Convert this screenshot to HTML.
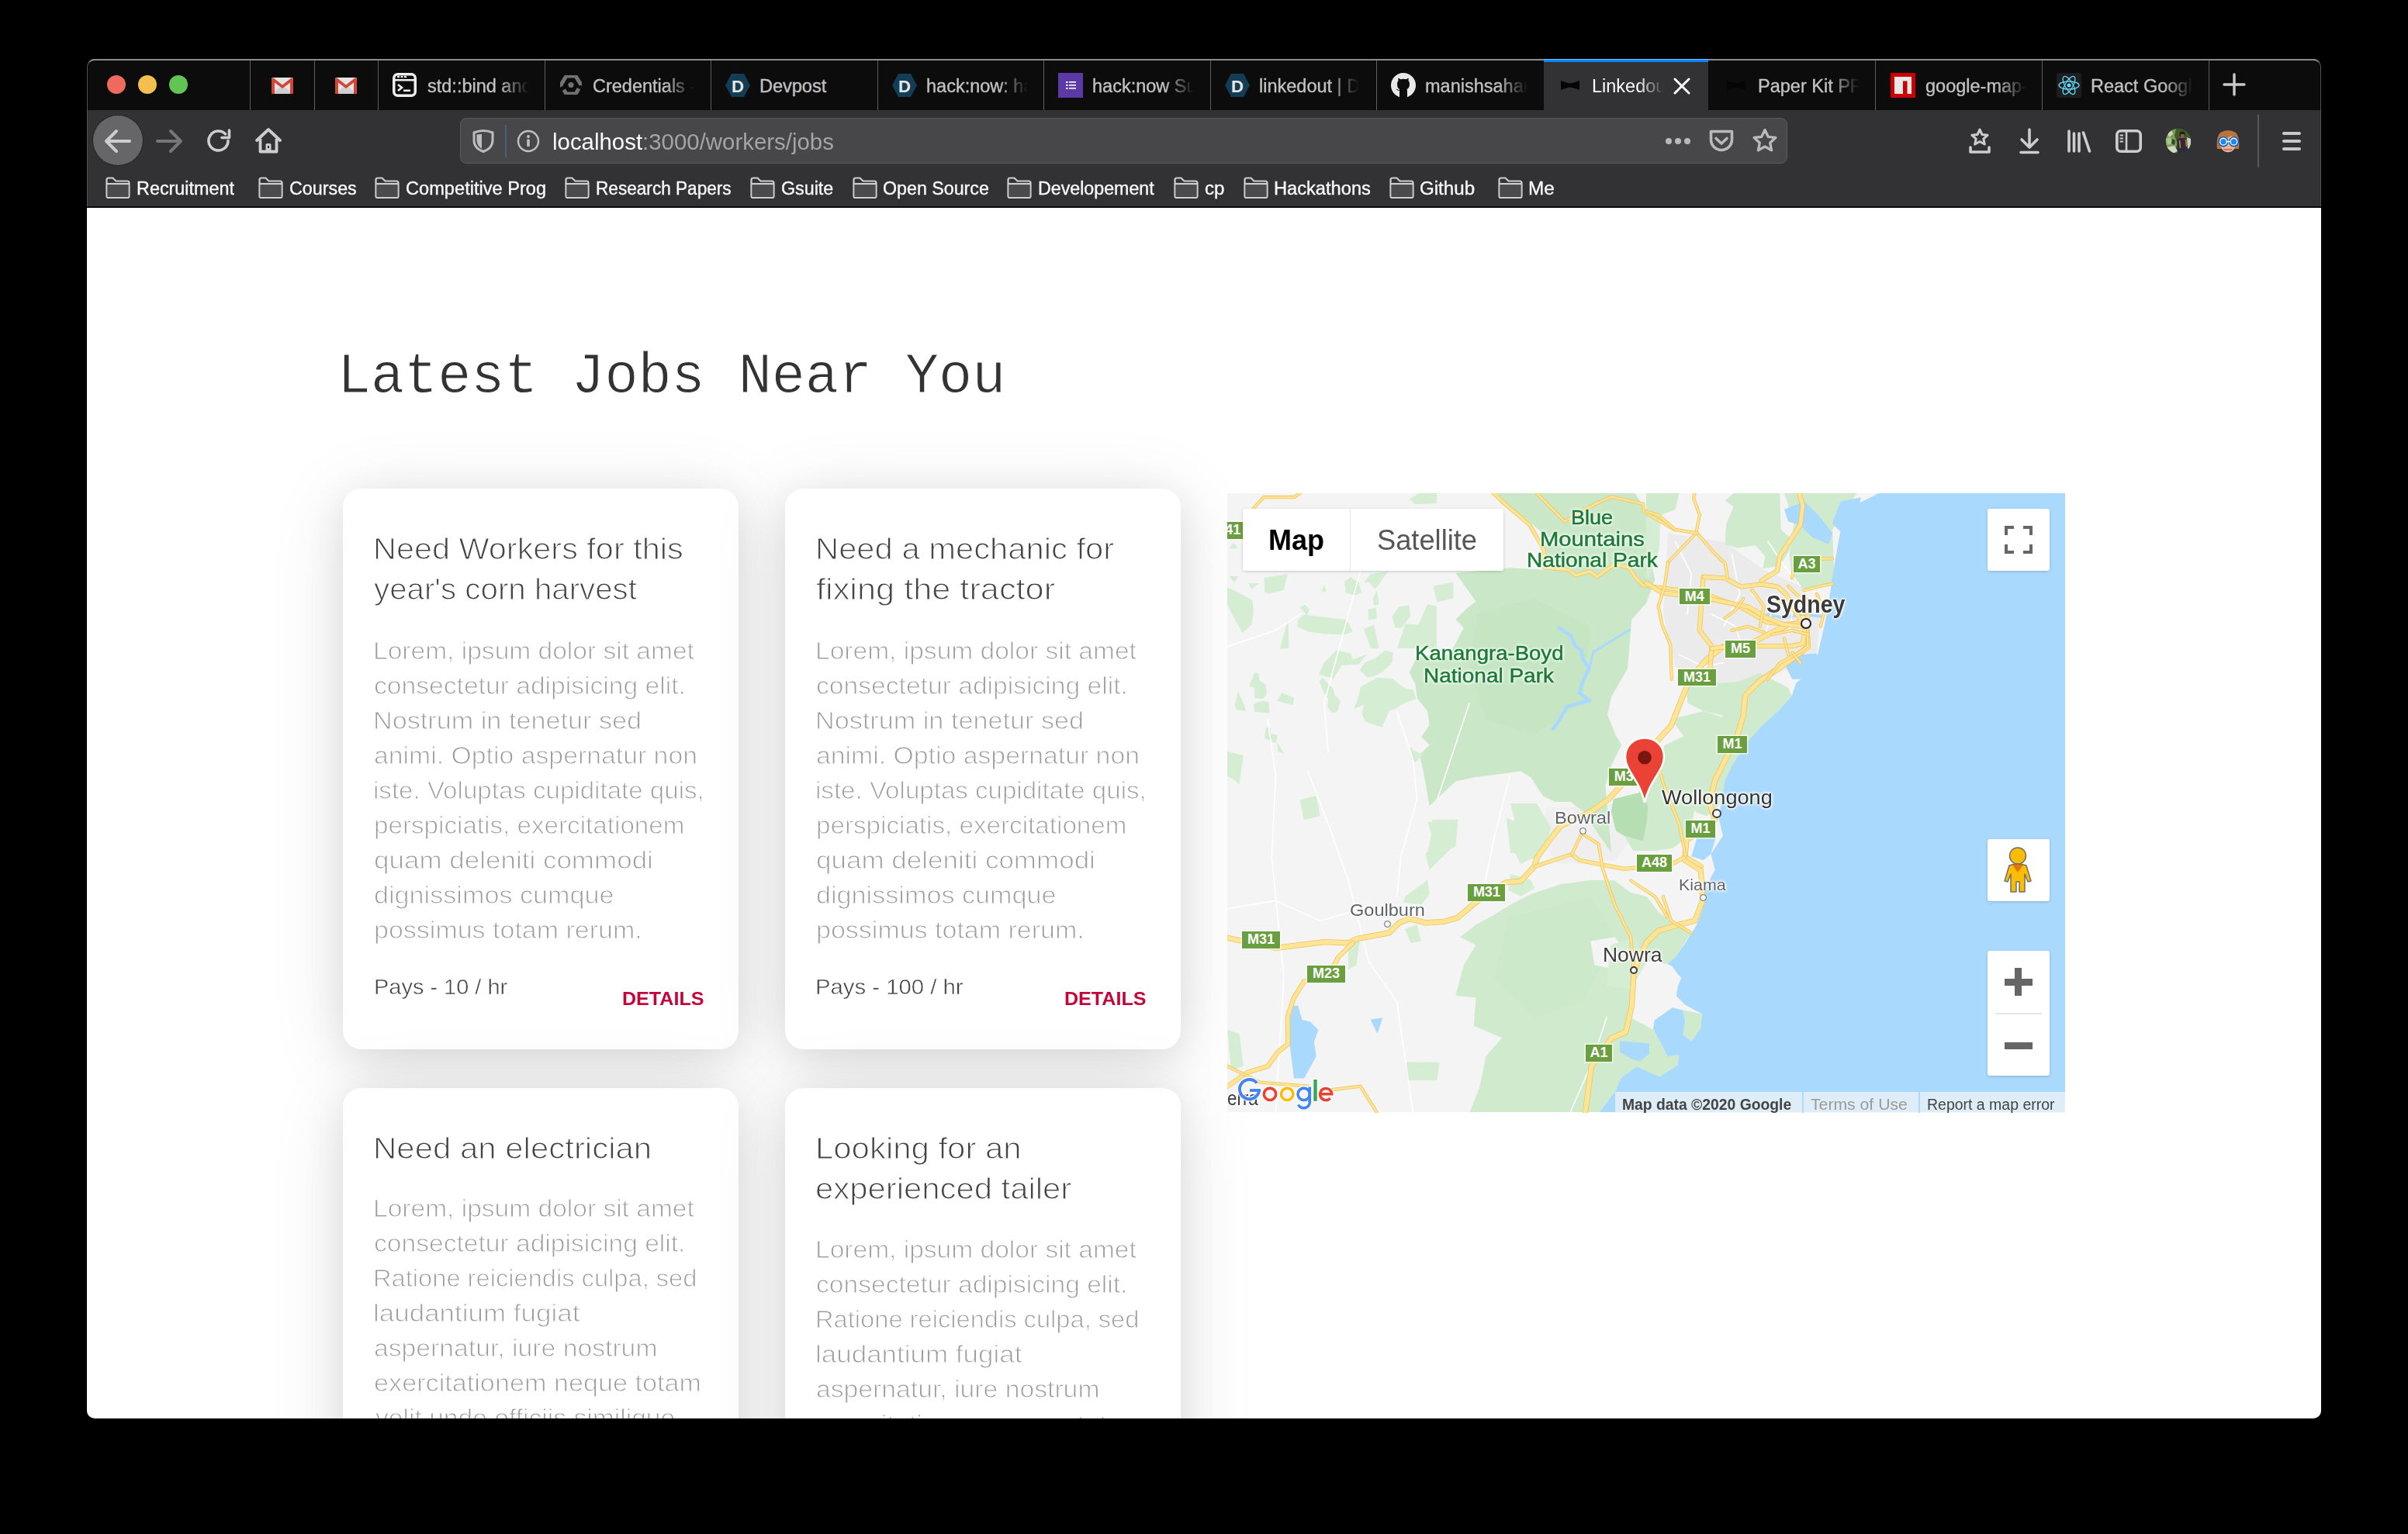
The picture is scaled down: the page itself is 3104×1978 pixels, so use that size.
<!DOCTYPE html>
<html><head><meta charset="utf-8">
<style>
html,body{margin:0;padding:0;background:#000;width:3104px;height:1978px;overflow:hidden;font-family:"Liberation Sans",sans-serif}
.tx{position:absolute;white-space:pre;transform-origin:0 0}
.ab{position:absolute}
</style></head><body>
<div class="ab" style="left:112px;top:76px;width:2880px;height:1753px;background:#323234;border-radius:10px;overflow:hidden">
<div class="ab" style="left:0;top:0;width:2880px;height:66px;background:#0c0c0d"></div>
<div class="ab" style="left:0;top:0;width:2880px;height:2px;background:#8c8c8c;border-radius:10px 10px 0 0"></div>
<div class="ab" style="left:0;top:190px;width:2880px;height:2px;background:#0a0a0a"></div>
<div class="ab" style="left:0;top:66px;width:1px;height:124px;background:#4a4a4c"></div>
<div class="ab" style="right:0;top:66px;width:1px;height:124px;background:#4a4a4c"></div>
</div>
<div class="ab" style="left:112px;top:76px;width:2880px;height:190px;border-radius:10px 10px 0 0;border-top:2px solid #8c8c8c;box-sizing:border-box;border-left:1px solid #525254;border-right:1px solid #525254"></div>
<div class="ab" style="left:138px;top:97px;width:24px;height:24px;border-radius:50%;background:#ee6a5f"></div>
<div class="ab" style="left:178px;top:97px;width:24px;height:24px;border-radius:50%;background:#f5bf4f"></div>
<div class="ab" style="left:218px;top:97px;width:24px;height:24px;border-radius:50%;background:#61c554"></div>
<div class="ab" style="left:322px;top:78px;width:1px;height:64px;background:#5c5c5d"></div>
<div class="ab" style="left:405px;top:78px;width:1px;height:64px;background:#5c5c5d"></div>
<div class="ab" style="left:487px;top:78px;width:1px;height:64px;background:#5c5c5d"></div>
<div class="ab" style="left:702px;top:78px;width:1px;height:64px;background:#5c5c5d"></div>
<div class="ab" style="left:916px;top:78px;width:1px;height:64px;background:#5c5c5d"></div>
<div class="ab" style="left:1131px;top:78px;width:1px;height:64px;background:#5c5c5d"></div>
<div class="ab" style="left:1345px;top:78px;width:1px;height:64px;background:#5c5c5d"></div>
<div class="ab" style="left:1560px;top:78px;width:1px;height:64px;background:#5c5c5d"></div>
<div class="ab" style="left:1774px;top:78px;width:1px;height:64px;background:#5c5c5d"></div>
<div class="ab" style="left:2417px;top:78px;width:1px;height:64px;background:#5c5c5d"></div>
<div class="ab" style="left:2632px;top:78px;width:1px;height:64px;background:#5c5c5d"></div>
<div class="ab" style="left:2847px;top:78px;width:1px;height:64px;background:#5c5c5d"></div>
<div class="ab" style="left:1990px;top:76px;width:212px;height:66px;background:#323234"></div>
<div class="ab" style="left:1990px;top:76px;width:212px;height:4px;background:#0a84ff"></div>
<div class="ab" style="left:1990px;top:76px;width:212px;height:1px;background:#7fc0ff"></div>
<svg class="ab" style="left:350px;top:100px" width="28" height="21" viewBox="0 0 28 21"><path d="M2 0H26Q28 0 28 2V19Q28 21 26 21H2Q0 21 0 19V2Q0 0 2 0Z" fill="#e4e4e4"/><path d="M0 21L14 10L28 21Z" fill="#cfcfcf"/><path d="M0 2.5Q0 0 2.5 0.5L14 9.5L25.5 0.5Q28 0 28 2.5V21H24V6.5L14 14L4 6.5V21H0Z" fill="#d0463a"/></svg>
<svg class="ab" style="left:432px;top:100px" width="28" height="21" viewBox="0 0 28 21"><path d="M2 0H26Q28 0 28 2V19Q28 21 26 21H2Q0 21 0 19V2Q0 0 2 0Z" fill="#e4e4e4"/><path d="M0 21L14 10L28 21Z" fill="#cfcfcf"/><path d="M0 2.5Q0 0 2.5 0.5L14 9.5L25.5 0.5Q28 0 28 2.5V21H24V6.5L14 14L4 6.5V21H0Z" fill="#d0463a"/></svg>
<svg class="ab" style="left:506px;top:94px" width="31" height="31" viewBox="0 0 31 31"><rect x="1.75" y="1.75" width="27.5" height="27.5" rx="5" fill="none" stroke="#efefef" stroke-width="3.5"/><rect x="2" y="8" width="27" height="2.5" fill="#efefef"/><rect x="6" y="4" width="3" height="2.2" fill="#efefef"/><rect x="10.5" y="4" width="3" height="2.2" fill="#efefef"/><rect x="15" y="4" width="3" height="2.2" fill="#efefef"/><path d="M7 15L12 19L7 23" fill="none" stroke="#efefef" stroke-width="2.6"/><rect x="14" y="21.5" width="9" height="2.6" fill="#efefef"/></svg>
<svg class="ab" style="left:722px;top:97px" width="28" height="25" viewBox="0 0 28 25"><path d="M8 1H20L27 12.5L20 24H8L1 12.5Z" fill="none" stroke="#727272" stroke-width="5" stroke-dasharray="26 5"/><circle cx="14" cy="12.5" r="3.6" fill="#727272"/></svg>
<svg class="ab" style="left:935px;top:95px" width="32" height="30" viewBox="0 0 32 30"><path d="M8 0H24L32 15L24 30H8L0 15Z" fill="#133c55"/><text x="16" y="24" text-anchor="middle" font-family="Liberation Sans" font-weight="700" font-size="22" fill="#e8e8e8">D</text></svg>
<svg class="ab" style="left:1150px;top:95px" width="32" height="30" viewBox="0 0 32 30"><path d="M8 0H24L32 15L24 30H8L0 15Z" fill="#133c55"/><text x="16" y="24" text-anchor="middle" font-family="Liberation Sans" font-weight="700" font-size="22" fill="#e8e8e8">D</text></svg>
<svg class="ab" style="left:1579px;top:95px" width="32" height="30" viewBox="0 0 32 30"><path d="M8 0H24L32 15L24 30H8L0 15Z" fill="#133c55"/><text x="16" y="24" text-anchor="middle" font-family="Liberation Sans" font-weight="700" font-size="22" fill="#e8e8e8">D</text></svg>
<svg class="ab" style="left:1364px;top:94px" width="32" height="32" viewBox="0 0 32 32"><rect width="32" height="32" fill="#5b3aa6"/><rect x="10" y="11" width="2.5" height="2" fill="#fff"/><rect x="14" y="11" width="9" height="1.6" fill="#fff"/><rect x="10" y="15" width="2.5" height="2" fill="#fff"/><rect x="14" y="15" width="9" height="1.6" fill="#fff"/><rect x="10" y="19" width="2.5" height="2" fill="#fff"/><rect x="14" y="19" width="9" height="1.6" fill="#fff"/></svg>
<svg class="ab" style="left:1793px;top:94px" width="32" height="32" viewBox="0 0 32 32"><circle cx="16" cy="16" r="16" fill="#e8e8e8"/><path d="M11 27V23Q8 23 6.5 20.5Q9 21 10.5 22.5L11 21Q8 19.5 8 14Q8 11.5 9.5 10L9.3 6.5L12.5 8.3Q16 7.3 19.5 8.3L22.7 6.5L22.5 10Q24 11.5 24 14Q24 19.5 20.5 21Q21 22 21 23.5V27L21 32H11Z" fill="#0c0c0d"/></svg>
<svg class="ab" style="left:2012px;top:104px" width="24" height="12" viewBox="0 0 24 12"><path d="M0 0L12 4L24 0V12L12 8L0 12Z" fill="#050505"/><rect x="9" y="3.5" width="6" height="5" fill="#050505"/></svg>
<svg class="ab" style="left:2226px;top:104px" width="24" height="12" viewBox="0 0 24 12"><path d="M0 0L12 4L24 0V12L12 8L0 12Z" fill="#050505"/><rect x="9" y="3.5" width="6" height="5" fill="#050505"/></svg>
<svg class="ab" style="left:2437px;top:94px" width="32" height="32" viewBox="0 0 32 32"><rect width="32" height="32" fill="#c00"/><path d="M5 5H27V27H21.5V10.5H16V27H5Z" fill="#e8e8e8"/></svg>
<svg class="ab" style="left:2651px;top:94px" width="32" height="32" viewBox="0 0 32 32"><rect width="32" height="32" rx="3" fill="#1e1e1f"/><g fill="none" stroke="#61dafb" stroke-width="1.3" transform="translate(16 16)"><ellipse rx="13" ry="5"/><ellipse rx="13" ry="5" transform="rotate(60)"/><ellipse rx="13" ry="5" transform="rotate(120)"/></g><circle cx="16" cy="16" r="2.5" fill="#61dafb"/></svg>
<svg class="ab" style="left:2157px;top:100px" width="22" height="22" viewBox="0 0 22 22"><path d="M2 2L20 20M20 2L2 20" stroke="#fbfbfb" stroke-width="3" stroke-linecap="round"/></svg>
<svg class="ab" style="left:2865px;top:94px" width="30" height="30" viewBox="0 0 30 30"><path d="M15 2V28M2 15H28" stroke="#c9c9c9" stroke-width="3.4" stroke-linecap="round"/></svg>
<div class="ab" style="left:120px;top:149px;width:64px;height:64px;border-radius:50%;background:#666668;box-shadow:0 0 0 1px #262628"></div>
<svg class="ab" style="left:134px;top:166px" width="36" height="32" viewBox="0 0 36 32"><path d="M4 16H33M16 3L3 16L16 29" fill="none" stroke="#cdcdce" stroke-width="4" stroke-linecap="round" stroke-linejoin="round"/></svg>
<svg class="ab" style="left:200px;top:166px" width="36" height="32" viewBox="0 0 36 32"><path d="M3 16H32M20 3L33 16L20 29" fill="none" stroke="#767678" stroke-width="4" stroke-linecap="round" stroke-linejoin="round"/></svg>
<svg class="ab" style="left:266px;top:165px" width="34" height="33" viewBox="0 0 34 33"><path d="M28 16.5A12.5 12.5 0 1 1 24.5 7.8" fill="none" stroke="#cdcdce" stroke-width="3.6" stroke-linecap="round"/><path d="M29.5 3V12.5H20" fill="none" stroke="#cdcdce" stroke-width="3.6" stroke-linecap="round" stroke-linejoin="round"/></svg>
<svg class="ab" style="left:328px;top:164px" width="36" height="36" viewBox="0 0 36 36"><path d="M3 17L18 3L33 17" fill="none" stroke="#cdcdce" stroke-width="3.8" stroke-linecap="round" stroke-linejoin="round"/><path d="M7.5 15V31.5H28.5V15" fill="none" stroke="#cdcdce" stroke-width="3.8" stroke-linejoin="round"/><rect x="14.5" y="21" width="7" height="11" rx="1.5" fill="#cdcdce"/><rect x="17" y="24" width="2" height="3" fill="#323234"/></svg>
<div class="ab" style="left:593px;top:152px;width:1711px;height:59px;box-sizing:border-box;border:1px solid #5a5a5c;border-radius:8px;background:#474749"></div>
<svg class="ab" style="left:609px;top:167px" width="28" height="30" viewBox="0 0 28 30"><path d="M2 4Q8 1.5 14 1.5Q20 1.5 26 4V14Q26 24 14 28.5Q2 24 2 14Z" fill="none" stroke="#bcbcbe" stroke-width="3"/><path d="M12 6V25L14 26Q6 22 5.5 14V6.5Q9 5.7 12 6Z" fill="#bcbcbe"/></svg>
<div class="ab" style="left:651px;top:161px;width:2px;height:42px;background:#4b5f7a"></div>
<svg class="ab" style="left:666px;top:167px" width="30" height="30" viewBox="0 0 30 30"><circle cx="15" cy="15" r="13" fill="none" stroke="#c0c0c2" stroke-width="2.4"/><circle cx="15" cy="9" r="2" fill="#c0c0c2"/><rect x="13.2" y="12.5" width="3.6" height="9.5" rx="1" fill="#c0c0c2"/></svg>
<div class="ab" style="left:2147px;top:178px;width:8px;height:8px;border-radius:50%;background:#b9b9bb"></div>
<div class="ab" style="left:2159px;top:178px;width:8px;height:8px;border-radius:50%;background:#b9b9bb"></div>
<div class="ab" style="left:2171px;top:178px;width:8px;height:8px;border-radius:50%;background:#b9b9bb"></div>
<svg class="ab" style="left:2202px;top:166px" width="34" height="32" viewBox="0 0 34 32"><path d="M3.5 3.5H30.5V14A13.5 13.5 0 0 1 3.5 14Z" fill="none" stroke="#b9b9bb" stroke-width="3.6" stroke-linejoin="round"/><path d="M10 12.5L17 19L24 12.5" fill="none" stroke="#b9b9bb" stroke-width="3.6" stroke-linecap="round" stroke-linejoin="round"/></svg>
<svg class="ab" style="left:2258px;top:165px" width="34" height="34" viewBox="0 0 34 34"><path d="M17 2.5L21.2 11.3L30.8 12.5L23.7 19.2L25.6 28.7L17 24L8.4 28.7L10.3 19.2L3.2 12.5L12.8 11.3Z" fill="none" stroke="#b9b9bb" stroke-width="3.3" stroke-linejoin="round"/></svg>
<svg class="ab" style="left:2536px;top:165px" width="32" height="34" viewBox="0 0 32 34"><path d="M16 2L19 8.5L26 9.3L20.8 14L22.3 21L16 17.5L9.7 21L11.2 14L6 9.3L13 8.5Z" fill="none" stroke="#cdcdce" stroke-width="3" stroke-linejoin="round"/><path d="M4 25V31H28V25" fill="none" stroke="#cdcdce" stroke-width="3.6" stroke-linecap="round" stroke-linejoin="round"/></svg>
<svg class="ab" style="left:2602px;top:164px" width="28" height="36" viewBox="0 0 28 36"><path d="M14 3V26M4 16L14 26L24 16" fill="none" stroke="#cdcdce" stroke-width="3.6" stroke-linecap="round" stroke-linejoin="round"/><path d="M3 32.5H25" stroke="#cdcdce" stroke-width="3.6" stroke-linecap="round"/></svg>
<svg class="ab" style="left:2664px;top:166px" width="34" height="32" viewBox="0 0 34 32"><path d="M3 3V29M9.5 6V29M16 6V29M21.5 5L29.5 29" fill="none" stroke="#cdcdce" stroke-width="3.6" stroke-linecap="round"/></svg>
<svg class="ab" style="left:2726px;top:166px" width="36" height="32" viewBox="0 0 36 32"><rect x="2.8" y="2.8" width="30.4" height="26.4" rx="5" fill="none" stroke="#cdcdce" stroke-width="3.6"/><path d="M15 3V29" stroke="#cdcdce" stroke-width="2.6"/><path d="M6.5 8.5H11M6.5 12.5H11M6.5 16.5H11" stroke="#cdcdce" stroke-width="1.8"/></svg>
<svg class="ab" style="left:2791px;top:165px" width="34" height="34" viewBox="0 0 34 34"><defs><clipPath id="av"><circle cx="17" cy="17" r="16.3"/></clipPath></defs><g clip-path="url(#av)"><rect width="34" height="34" fill="#3e5a2c"/><path d="M0 0H14L12 10L16 20L10 34H0Z" fill="#7f9c5c"/><path d="M2 4L8 2L10 8L5 12Z" fill="#c8d8b0"/><path d="M1 14L7 12L9 20L3 22Z" fill="#aac48a"/><path d="M2 25L12 23L16 30L8 34L2 32Z" fill="#d0d8c4"/><path d="M9 14L13 16L12 22L8 20Z" fill="#2e4a22"/><path d="M15 15Q21 11 27 14L30 34H16Z" fill="#2b2d3c"/><circle cx="22" cy="8" r="3.6" fill="#2a1c18"/><rect x="20" y="8" width="4.5" height="5" fill="#8a5a40"/><path d="M18.5 16L19.5 26M26.5 15L27.5 24" stroke="#d9772e" stroke-width="1.6"/><path d="M28 12L33 14L33 30L29 26Z" fill="#c9d2c4"/></g></svg>
<svg class="ab" style="left:2856px;top:166px" width="32" height="32" viewBox="0 0 32 32"><path d="M2 26Q0.5 10 6 5Q16 -1 26 5Q31.5 10 30 26Z" fill="#b8743a"/><ellipse cx="16" cy="19.3" rx="10.3" ry="11" fill="#f3b48c"/><path d="M5 9Q14 4 24 8Q16 10 9 17Z" fill="#b8743a"/><path d="M10.5 26.3Q16 28 21.5 26.3" stroke="#9d6474" stroke-width="1.3" fill="none"/><circle cx="10" cy="16.7" r="5.9" fill="#fff" stroke="#0b5fc0" stroke-width="1.6"/><circle cx="23.4" cy="16.7" r="5.9" fill="#fff" stroke="#0b5fc0" stroke-width="1.6"/><circle cx="10" cy="16.7" r="3.7" fill="#1e88f0"/><circle cx="23.4" cy="16.7" r="3.7" fill="#1e88f0"/><rect x="15.2" y="15.6" width="3" height="2" fill="#fff"/></svg>
<div class="ab" style="left:2910px;top:148px;width:2px;height:68px;background:#575759"></div>
<div class="ab" style="left:2942px;top:170px;width:24px;height:4px;border-radius:2px;background:#c8c8ca"></div>
<div class="ab" style="left:2942px;top:180px;width:24px;height:4px;border-radius:2px;background:#c8c8ca"></div>
<div class="ab" style="left:2942px;top:190px;width:24px;height:4px;border-radius:2px;background:#c8c8ca"></div>
<svg class="ab" style="left:136px;top:228px" width="32" height="28" viewBox="0 0 32 28"><path d="M1.5 25V4Q1.5 1.5 4 1.5H9.5L13.5 5.5H28Q30.5 5.5 30.5 8V25Q30.5 27 28.5 27H3.5Q1.5 27 1.5 25Z" fill="none" stroke="#cfcfd0" stroke-width="2.2"/><rect x="2.6" y="10.2" width="26.8" height="15.7" fill="#4b4b4d"/><path d="M1.5 9H30.5" stroke="#cfcfd0" stroke-width="2.2"/></svg>
<svg class="ab" style="left:333px;top:228px" width="32" height="28" viewBox="0 0 32 28"><path d="M1.5 25V4Q1.5 1.5 4 1.5H9.5L13.5 5.5H28Q30.5 5.5 30.5 8V25Q30.5 27 28.5 27H3.5Q1.5 27 1.5 25Z" fill="none" stroke="#cfcfd0" stroke-width="2.2"/><rect x="2.6" y="10.2" width="26.8" height="15.7" fill="#4b4b4d"/><path d="M1.5 9H30.5" stroke="#cfcfd0" stroke-width="2.2"/></svg>
<svg class="ab" style="left:483px;top:228px" width="32" height="28" viewBox="0 0 32 28"><path d="M1.5 25V4Q1.5 1.5 4 1.5H9.5L13.5 5.5H28Q30.5 5.5 30.5 8V25Q30.5 27 28.5 27H3.5Q1.5 27 1.5 25Z" fill="none" stroke="#cfcfd0" stroke-width="2.2"/><rect x="2.6" y="10.2" width="26.8" height="15.7" fill="#4b4b4d"/><path d="M1.5 9H30.5" stroke="#cfcfd0" stroke-width="2.2"/></svg>
<svg class="ab" style="left:728px;top:228px" width="32" height="28" viewBox="0 0 32 28"><path d="M1.5 25V4Q1.5 1.5 4 1.5H9.5L13.5 5.5H28Q30.5 5.5 30.5 8V25Q30.5 27 28.5 27H3.5Q1.5 27 1.5 25Z" fill="none" stroke="#cfcfd0" stroke-width="2.2"/><rect x="2.6" y="10.2" width="26.8" height="15.7" fill="#4b4b4d"/><path d="M1.5 9H30.5" stroke="#cfcfd0" stroke-width="2.2"/></svg>
<svg class="ab" style="left:967px;top:228px" width="32" height="28" viewBox="0 0 32 28"><path d="M1.5 25V4Q1.5 1.5 4 1.5H9.5L13.5 5.5H28Q30.5 5.5 30.5 8V25Q30.5 27 28.5 27H3.5Q1.5 27 1.5 25Z" fill="none" stroke="#cfcfd0" stroke-width="2.2"/><rect x="2.6" y="10.2" width="26.8" height="15.7" fill="#4b4b4d"/><path d="M1.5 9H30.5" stroke="#cfcfd0" stroke-width="2.2"/></svg>
<svg class="ab" style="left:1099px;top:228px" width="32" height="28" viewBox="0 0 32 28"><path d="M1.5 25V4Q1.5 1.5 4 1.5H9.5L13.5 5.5H28Q30.5 5.5 30.5 8V25Q30.5 27 28.5 27H3.5Q1.5 27 1.5 25Z" fill="none" stroke="#cfcfd0" stroke-width="2.2"/><rect x="2.6" y="10.2" width="26.8" height="15.7" fill="#4b4b4d"/><path d="M1.5 9H30.5" stroke="#cfcfd0" stroke-width="2.2"/></svg>
<svg class="ab" style="left:1298px;top:228px" width="32" height="28" viewBox="0 0 32 28"><path d="M1.5 25V4Q1.5 1.5 4 1.5H9.5L13.5 5.5H28Q30.5 5.5 30.5 8V25Q30.5 27 28.5 27H3.5Q1.5 27 1.5 25Z" fill="none" stroke="#cfcfd0" stroke-width="2.2"/><rect x="2.6" y="10.2" width="26.8" height="15.7" fill="#4b4b4d"/><path d="M1.5 9H30.5" stroke="#cfcfd0" stroke-width="2.2"/></svg>
<svg class="ab" style="left:1513px;top:228px" width="32" height="28" viewBox="0 0 32 28"><path d="M1.5 25V4Q1.5 1.5 4 1.5H9.5L13.5 5.5H28Q30.5 5.5 30.5 8V25Q30.5 27 28.5 27H3.5Q1.5 27 1.5 25Z" fill="none" stroke="#cfcfd0" stroke-width="2.2"/><rect x="2.6" y="10.2" width="26.8" height="15.7" fill="#4b4b4d"/><path d="M1.5 9H30.5" stroke="#cfcfd0" stroke-width="2.2"/></svg>
<svg class="ab" style="left:1603px;top:228px" width="32" height="28" viewBox="0 0 32 28"><path d="M1.5 25V4Q1.5 1.5 4 1.5H9.5L13.5 5.5H28Q30.5 5.5 30.5 8V25Q30.5 27 28.5 27H3.5Q1.5 27 1.5 25Z" fill="none" stroke="#cfcfd0" stroke-width="2.2"/><rect x="2.6" y="10.2" width="26.8" height="15.7" fill="#4b4b4d"/><path d="M1.5 9H30.5" stroke="#cfcfd0" stroke-width="2.2"/></svg>
<svg class="ab" style="left:1791px;top:228px" width="32" height="28" viewBox="0 0 32 28"><path d="M1.5 25V4Q1.5 1.5 4 1.5H9.5L13.5 5.5H28Q30.5 5.5 30.5 8V25Q30.5 27 28.5 27H3.5Q1.5 27 1.5 25Z" fill="none" stroke="#cfcfd0" stroke-width="2.2"/><rect x="2.6" y="10.2" width="26.8" height="15.7" fill="#4b4b4d"/><path d="M1.5 9H30.5" stroke="#cfcfd0" stroke-width="2.2"/></svg>
<svg class="ab" style="left:1931px;top:228px" width="32" height="28" viewBox="0 0 32 28"><path d="M1.5 25V4Q1.5 1.5 4 1.5H9.5L13.5 5.5H28Q30.5 5.5 30.5 8V25Q30.5 27 28.5 27H3.5Q1.5 27 1.5 25Z" fill="none" stroke="#cfcfd0" stroke-width="2.2"/><rect x="2.6" y="10.2" width="26.8" height="15.7" fill="#4b4b4d"/><path d="M1.5 9H30.5" stroke="#cfcfd0" stroke-width="2.2"/></svg>
<div class="tx" style="left:551.0px;top:100.0px;font-family:'Liberation Sans';font-size:23.5px;line-height:23.5px;font-weight:400;color:#c2c2c2;transform:scaleX(1.0000);width:131px;overflow:hidden;-webkit-mask-image:linear-gradient(to right,#000 93px,transparent 131px);-webkit-text-stroke:0.35px #c2c2c2;">std::bind and std::function</div>
<div class="tx" style="left:764.0px;top:100.0px;font-family:'Liberation Sans';font-size:23.5px;line-height:23.5px;font-weight:400;color:#c2c2c2;transform:scaleX(1.0000);width:131px;overflow:hidden;-webkit-mask-image:linear-gradient(to right,#000 93px,transparent 131px);-webkit-text-stroke:0.35px #c2c2c2;">Credentials - APIs & Services</div>
<div class="tx" style="left:979.0px;top:100.0px;font-family:'Liberation Sans';font-size:23.5px;line-height:23.5px;font-weight:400;color:#c2c2c2;transform:scaleX(1.0000);-webkit-text-stroke:0.35px #c2c2c2;">Devpost</div>
<div class="tx" style="left:1194.0px;top:100.0px;font-family:'Liberation Sans';font-size:23.5px;line-height:23.5px;font-weight:400;color:#c2c2c2;transform:scaleX(1.0000);width:131px;overflow:hidden;-webkit-mask-image:linear-gradient(to right,#000 93px,transparent 131px);-webkit-text-stroke:0.35px #c2c2c2;">hack:now: hackathon</div>
<div class="tx" style="left:1408.0px;top:100.0px;font-family:'Liberation Sans';font-size:23.5px;line-height:23.5px;font-weight:400;color:#c2c2c2;transform:scaleX(1.0000);width:131px;overflow:hidden;-webkit-mask-image:linear-gradient(to right,#000 93px,transparent 131px);-webkit-text-stroke:0.35px #c2c2c2;">hack:now Submission</div>
<div class="tx" style="left:1623.0px;top:100.0px;font-family:'Liberation Sans';font-size:23.5px;line-height:23.5px;font-weight:400;color:#c2c2c2;transform:scaleX(1.0000);width:129px;overflow:hidden;-webkit-mask-image:linear-gradient(to right,#000 91px,transparent 129px);-webkit-text-stroke:0.35px #c2c2c2;">linkedout | Devpost</div>
<div class="tx" style="left:1837.0px;top:100.0px;font-family:'Liberation Sans';font-size:23.5px;line-height:23.5px;font-weight:400;color:#c2c2c2;transform:scaleX(1.0000);width:132px;overflow:hidden;-webkit-mask-image:linear-gradient(to right,#000 94px,transparent 132px);-webkit-text-stroke:0.35px #c2c2c2;">manishsaharan/linkedout</div>
<div class="tx" style="left:2266.0px;top:100.0px;font-family:'Liberation Sans';font-size:23.5px;line-height:23.5px;font-weight:400;color:#c2c2c2;transform:scaleX(1.0000);width:131px;overflow:hidden;-webkit-mask-image:linear-gradient(to right,#000 93px,transparent 131px);-webkit-text-stroke:0.35px #c2c2c2;">Paper Kit PRO React</div>
<div class="tx" style="left:2482.0px;top:100.0px;font-family:'Liberation Sans';font-size:23.5px;line-height:23.5px;font-weight:400;color:#c2c2c2;transform:scaleX(1.0000);width:130px;overflow:hidden;-webkit-mask-image:linear-gradient(to right,#000 92px,transparent 130px);-webkit-text-stroke:0.35px #c2c2c2;">google-map-react</div>
<div class="tx" style="left:2695.0px;top:100.0px;font-family:'Liberation Sans';font-size:23.5px;line-height:23.5px;font-weight:400;color:#c2c2c2;transform:scaleX(1.0000);width:132px;overflow:hidden;-webkit-mask-image:linear-gradient(to right,#000 94px,transparent 132px);-webkit-text-stroke:0.35px #c2c2c2;">React Google Maps</div>
<div class="tx" style="left:2052.0px;top:100.0px;font-family:'Liberation Sans';font-size:23.5px;line-height:23.5px;font-weight:400;color:#fbfbfb;transform:scaleX(1.0000);width:93px;overflow:hidden;-webkit-mask-image:linear-gradient(to right,#000 60px,transparent 93px);">Linkedout</div>
<div class="tx" style="left:175.8px;top:232.0px;font-family:'Liberation Sans';font-size:23px;line-height:23px;font-weight:400;color:#f9f9fa;transform:scaleX(1.0162);-webkit-text-stroke:0.35px #f9f9fa;">Recruitment</div>
<div class="tx" style="left:372.6px;top:232.0px;font-family:'Liberation Sans';font-size:23px;line-height:23px;font-weight:400;color:#f9f9fa;transform:scaleX(1.0126);-webkit-text-stroke:0.35px #f9f9fa;">Courses</div>
<div class="tx" style="left:523.0px;top:232.0px;font-family:'Liberation Sans';font-size:23px;line-height:23px;font-weight:400;color:#f9f9fa;transform:scaleX(1.0268);-webkit-text-stroke:0.35px #f9f9fa;">Competitive Prog</div>
<div class="tx" style="left:768.4px;top:232.0px;font-family:'Liberation Sans';font-size:23px;line-height:23px;font-weight:400;color:#f9f9fa;transform:scaleX(0.9830);-webkit-text-stroke:0.35px #f9f9fa;">Research Papers</div>
<div class="tx" style="left:1007.0px;top:232.0px;font-family:'Liberation Sans';font-size:23px;line-height:23px;font-weight:400;color:#f9f9fa;transform:scaleX(1.0111);-webkit-text-stroke:0.35px #f9f9fa;">Gsuite</div>
<div class="tx" style="left:1138.0px;top:232.0px;font-family:'Liberation Sans';font-size:23px;line-height:23px;font-weight:400;color:#f9f9fa;transform:scaleX(1.0094);-webkit-text-stroke:0.35px #f9f9fa;">Open Source</div>
<div class="tx" style="left:1337.7px;top:232.0px;font-family:'Liberation Sans';font-size:23px;line-height:23px;font-weight:400;color:#f9f9fa;transform:scaleX(1.0093);-webkit-text-stroke:0.35px #f9f9fa;">Developement</div>
<div class="tx" style="left:1553.4px;top:232.0px;font-family:'Liberation Sans';font-size:23px;line-height:23px;font-weight:400;color:#f9f9fa;transform:scaleX(1.0468);-webkit-text-stroke:0.35px #f9f9fa;">cp</div>
<div class="tx" style="left:1641.7px;top:232.0px;font-family:'Liberation Sans';font-size:23px;line-height:23px;font-weight:400;color:#f9f9fa;transform:scaleX(1.0279);-webkit-text-stroke:0.35px #f9f9fa;">Hackathons</div>
<div class="tx" style="left:1829.8px;top:232.0px;font-family:'Liberation Sans';font-size:23px;line-height:23px;font-weight:400;color:#f9f9fa;transform:scaleX(1.0489);-webkit-text-stroke:0.35px #f9f9fa;">Github</div>
<div class="tx" style="left:1969.7px;top:232.0px;font-family:'Liberation Sans';font-size:23px;line-height:23px;font-weight:400;color:#f9f9fa;transform:scaleX(1.0577);-webkit-text-stroke:0.35px #f9f9fa;">Me</div>
<div class="tx" style="left:712.3px;top:168.8px;font-family:'Liberation Sans';font-size:29px;line-height:29px;font-weight:400;color:#fbfbfb;transform:scaleX(1.0139);"><span>localhost</span><span style="color:#a4a4a6">:3000/workers/jobs</span></div>
<div class="ab" id="content" style="left:112px;top:268px;width:2880px;height:1561px;background:#fff;overflow:hidden;border-radius:0 0 10px 10px">
<div class="ab" style="left:-112px;top:-268px;width:3104px;height:1978px">
<div class="ab card" style="left:442px;top:630px;width:510px;height:723px;background:#fff;border-radius:24px;box-shadow:0 10px 50px rgba(0,0,0,0.08),0 14px 100px rgba(0,0,0,0.115)"></div>
<div class="ab card" style="left:1012px;top:630px;width:510px;height:723px;background:#fff;border-radius:24px;box-shadow:0 10px 50px rgba(0,0,0,0.08),0 14px 100px rgba(0,0,0,0.115)"></div>
<div class="ab card" style="left:442px;top:1403px;width:510px;height:723px;background:#fff;border-radius:24px;box-shadow:0 10px 50px rgba(0,0,0,0.08),0 14px 100px rgba(0,0,0,0.115)"></div>
<div class="ab card" style="left:1012px;top:1403px;width:510px;height:723px;background:#fff;border-radius:24px;box-shadow:0 10px 50px rgba(0,0,0,0.08),0 14px 100px rgba(0,0,0,0.115)"></div>

<div class="ab" style="left:1582px;top:636px;width:1080px;height:799px;overflow:hidden">
<svg class="ab" style="left:0;top:0" width="1080" height="799" viewBox="0 0 2076 1536" preserveAspectRatio="none"><rect width="2076" height="1534" fill="#f4f4f4"/><path d="M1092.0,99.0 L1230.0,120.0 L1330.0,190.0 L1420.0,230.0 L1470.0,300.0 L1460.0,400.0 L1339.0,460.0 L1200.0,470.0 L1110.0,430.0 L1080.0,300.0 Z" fill="#ebebeb" /><path d="M790.0,780.0 L960.0,770.0 L1000.0,860.0 L960.0,910.0 L820.0,920.0 L780.0,860.0 Z" fill="#efefef" /><path d="M671.0,0.0 L1010.0,0.0 L1050.0,60.0 L1040.0,130.0 L1060.0,215.0 L1038.0,273.0 L1002.0,313.0 L992.0,434.0 L952.0,504.0 L942.0,549.0 L962.0,599.0 L977.0,624.0 L952.0,674.0 L937.0,724.0 L942.0,785.0 L952.0,892.0 L882.0,790.0 L852.0,765.0 L812.0,765.0 L782.0,750.0 L752.0,704.0 L727.0,689.0 L692.0,694.0 L612.0,704.0 L566.0,714.0 L501.0,775.0 L486.0,689.0 L476.0,649.0 L501.0,624.0 L481.0,604.0 L501.0,574.0 L496.0,539.0 L471.0,509.0 L466.0,474.0 L451.0,444.0 L471.0,404.0 L551.0,399.0 L586.0,334.0 L566.0,313.0 L591.0,288.0 L616.0,268.0 L566.0,198.0 L700.0,185.0 L792.0,190.0 L782.0,100.0 L742.0,65.0 L677.0,25.0 Z" fill="#cae8c8" /><path d="M620.0,300.0 L760.0,260.0 L900.0,330.0 L880.0,520.0 L760.0,600.0 L640.0,560.0 L600.0,420.0 Z" fill="#c5e5c3" /><path d="M1084.0,625.0 L1136.0,600.0 L1206.0,637.0 L1218.0,682.0 L1188.0,734.0 L1157.0,789.0 L1145.0,849.0 L1103.0,880.0 L1060.0,886.0 L1006.0,886.0 L984.0,849.0 L1000.0,780.0 L1040.0,700.0 Z" fill="#cfeacd" /><path d="M957.0,758.0 L1030.0,740.0 L1042.0,776.0 L1039.0,819.0 L1030.0,861.0 L984.0,849.0 L963.0,837.0 L951.0,789.0 Z" fill="#b5dfb3" /><path d="M1100.0,560.0 L1180.0,540.0 L1240.0,560.0 L1282.0,600.0 L1230.0,640.0 L1136.0,610.0 Z" fill="#cfeacd" /><path d="M1138.0,476.0 L1268.6,466.0 L1318.7,446.0 L1388.8,481.0 L1398.9,501.0 L1363.8,541.0 L1323.7,576.4 L1288.6,616.5 L1253.5,671.6 L1233.5,711.7 L1223.5,768.8 L1188.0,800.0 L1160.0,790.0 L1153.0,701.0 L1188.0,626.0 L1228.0,551.0 L1180.0,540.0 L1140.0,520.0 Z" fill="#cfeacd" /><path d="M1233.5,18.0 L1254.5,0.0 L1368.8,0.0 L1372.0,90.2 L1398.9,114.3 L1393.0,141.3 L1368.8,180.4 L1326.7,186.4 L1332.7,156.4 L1308.7,129.3 L1263.6,135.3 L1233.5,126.3 L1236.5,75.2 L1254.5,33.1 Z" fill="#cfeacd" /><path d="M1380.0,0.0 L1560.0,0.0 L1520.0,60.0 L1499.3,90.2 L1505.0,222.5 L1459.0,234.6 L1429.0,240.6 L1398.9,210.5 L1393.0,150.4 L1404.9,72.2 Z" fill="#cfeacd" /><path d="M1038.0,0.0 L1120.0,0.0 L1110.0,40.0 L1060.0,60.0 L1038.0,50.0 Z" fill="#cfeacd" /><path d="M1038.0,60.0 L1074.0,54.0 L1070.0,140.0 L1045.0,210.0 L1038.0,210.0 Z" fill="#d5edd3" /><path d="M576.0,1100.0 L616.0,1070.0 L652.0,1050.0 L702.0,1020.0 L752.0,994.0 L827.0,969.0 L902.0,959.0 L960.0,960.0 L1000.0,990.0 L1040.0,1000.0 L1070.0,1040.0 L1100.0,1060.0 L1150.0,1090.0 L1109.5,1150.6 L1090.5,1166.6 L1050.0,1190.0 L1020.0,1220.0 L1000.0,1250.0 L1000.0,1300.0 L1055.0,1330.0 L1074.0,1364.0 L1090.0,1395.0 L1119.0,1392.0 L1116.0,1418.0 L1071.0,1447.0 L1014.0,1421.0 L976.0,1450.0 L960.0,1485.0 L921.0,1534.0 L601.0,1534.0 L626.0,1470.0 L641.0,1395.0 L681.0,1350.0 L646.0,1335.0 L611.0,1320.0 L616.0,1250.0 L566.0,1245.0 L586.0,1170.0 L616.0,1120.0 Z" fill="#cfeacd" /><path d="M700.0,1050.0 L900.0,1000.0 L960.0,1100.0 L880.0,1260.0 L760.0,1300.0 L660.0,1200.0 Z" fill="#cce9ca" /><path d="M1005.0,1168.0 L1060.0,1158.0 L1100.0,1172.0 L1118.0,1200.0 L1108.0,1240.0 L1070.0,1262.0 L1010.0,1240.0 Z" fill="#f4f4f4" /><path d="M900.0,1110.0 L960.0,1100.0 L990.0,1140.0 L960.0,1180.0 L910.0,1170.0 Z" fill="#f4f4f4" /><path d="M1128.0,1281.0 L1176.0,1291.0 L1173.0,1326.0 L1151.0,1357.0 L1128.0,1342.0 L1135.0,1310.0 Z" fill="#cfeacd" /><path d="M701.7,769.0 L766.8,769.0 L802.0,829.0 L782.0,894.0 L727.0,919.0 L701.7,869.0 L711.7,809.0 Z" fill="#d5edd3" /><path d="M701.7,944.0 L751.8,959.0 L761.8,979.0 L726.8,999.0 L696.7,984.0 Z" fill="#d5edd3" /><path d="M506.0,809.0 L571.0,809.0 L566.0,869.0 L541.0,894.0 L501.0,934.0 L491.0,894.0 L526.0,854.0 Z" fill="#d5edd3" /><path d="M441.0,1000.0 L496.0,959.0 L501.0,994.0 L481.0,1020.0 L436.0,1014.0 Z" fill="#d5edd3" /><path d="M496.0,814.7 L571.0,814.7 L566.0,875.0 L531.0,892.0 L496.0,892.0 L506.0,845.0 Z" fill="#d5edd3" /><path d="M691.7,804.6 L741.8,824.7 L751.8,892.0 L701.7,892.0 Z" fill="#d5edd3" /><path d="M0.0,233.0 L17.5,240.6 L62.7,265.6 L65.2,295.7 L60.1,325.8 L37.6,345.8 L15.0,305.7 L0.0,275.7 Z" fill="#d5edd3" /><path d="M175.4,313.3 L190.5,300.7 L245.6,308.2 L295.7,313.3 L310.7,343.3 L288.2,350.8 L240.6,348.3 L200.5,343.3 L172.9,330.8 Z" fill="#d5edd3" /><path d="M180.4,283.2 L193.0,275.7 L203.0,288.2 L198.0,303.2 Z" fill="#d5edd3" /><path d="M290.7,218.0 L305.7,208.0 L325.8,220.5 L333.3,245.6 L315.8,253.1 L293.2,245.6 Z" fill="#d5edd3" /><path d="M338.3,220.5 L355.8,200.5 L398.5,193.0 L375.9,225.5 L365.9,238.0 L350.8,220.5 Z" fill="#d5edd3" /><path d="M360.9,260.6 L370.9,240.6 L375.9,275.7 L363.4,278.2 Z" fill="#d5edd3" /><path d="M348.3,288.2 L368.4,283.2 L370.9,310.7 L350.8,313.3 Z" fill="#d5edd3" /><path d="M408.5,305.7 L426.0,280.7 L451.0,278.2 L453.6,305.7 L431.0,333.3 L416.0,333.3 Z" fill="#d5edd3" /><path d="M338.3,335.8 L363.4,325.8 L375.9,384.4 L355.8,384.4 Z" fill="#d5edd3" /><path d="M421.0,384.4 L441.0,323.3 L473.6,325.8 L496.2,275.7 L519.0,280.7 L519.0,384.4 Z" fill="#d5edd3" /><path d="M5.0,137.8 L15.0,122.8 L27.6,135.3 Z" fill="#d5edd3" /><path d="M52.6,223.0 L80.2,223.0 L60.1,238.0 Z" fill="#d5edd3" /><path d="M92.7,218.0 L105.2,215.5 L100.2,248.0 L92.7,245.6 Z" fill="#d5edd3" /><path d="M5.0,205.5 L27.6,205.5 L17.5,220.5 Z" fill="#d5edd3" /><path d="M233.0,243.0 L240.6,228.0 L245.6,245.6 Z" fill="#d5edd3" /><path d="M130.3,385.9 L150.4,313.3 L152.9,384.4 Z" fill="#d5edd3" /><path d="M451.0,15.0 L476.0,0.0 L519.0,0.0 L519.0,25.0 L466.0,27.6 Z" fill="#d5edd3" /><path d="M228.0,449.6 L238.0,422.0 L270.6,389.4 L305.7,396.9 L310.7,412.0 L345.8,399.4 L325.8,424.5 L283.2,427.0 L263.0,459.6 Z" fill="#d5edd3" /><path d="M328.3,439.5 L340.8,419.5 L365.9,409.5 L391.0,389.4 L411.0,394.4 L408.5,419.5 L386.0,442.0 L368.4,452.0 L348.3,457.0 Z" fill="#d5edd3" /><path d="M228.0,467.0 L235.6,457.0 L263.0,484.6 L265.6,499.7 L280.7,514.7 L273.2,539.8 L260.6,544.8 L248.0,529.8 L250.6,509.7 L238.0,492.2 Z" fill="#d5edd3" /><path d="M330.8,479.6 L370.9,457.0 L408.5,459.6 L441.0,484.6 L461.0,487.1 L468.6,509.7 L441.0,519.7 L413.5,534.8 L401.0,539.8 L383.4,579.9 L343.3,567.3 L333.3,547.3 L338.3,524.7 L313.3,534.8 L323.3,509.7 Z" fill="#d5edd3" /><path d="M67.7,444.5 L77.7,447.0 L80.2,464.6 L95.2,474.6 L97.7,497.2 L87.7,509.7 L67.7,507.2 L67.7,482.1 L55.1,479.6 L57.6,469.6 Z" fill="#d5edd3" /><path d="M65.2,522.2 L85.2,514.7 L102.7,517.2 L105.2,544.8 L67.7,542.3 Z" fill="#d5edd3" /><path d="M27.6,492.2 L47.6,539.8 L22.6,537.3 L18.8,522.2 Z" fill="#d5edd3" /><path d="M135.3,494.7 L165.4,507.2 L162.9,524.7 L150.4,522.2 L122.8,514.7 Z" fill="#d5edd3" /><path d="M95.2,579.9 L107.8,582.4 L107.8,594.9 L125.3,599.9 L120.3,620.0 L92.7,607.4 Z" fill="#d5edd3" /><path d="M122.8,615.0 L140.3,645.0 L125.3,640.0 Z" fill="#d5edd3" /><path d="M453.6,627.5 L461.0,637.5 L486.0,647.5 L466.0,667.6 L456.0,657.6 Z" fill="#d5edd3" /><path d="M441.0,1410.0 L526.0,1410.0 L520.0,1455.0 L446.0,1455.0 Z" fill="#d5edd3" /><path d="M300.0,1120.0 L330.0,1100.0 L320.0,1170.0 L300.0,1180.0 Z" fill="#d5edd3" /><path d="M440.0,1080.0 L470.0,1070.0 L480.0,1110.0 L455.0,1115.0 Z" fill="#d5edd3" /><path d="M90.0,210.0 L150.0,200.0 L140.0,240.0 L100.0,250.0 Z" fill="#d5edd3" /><path d="M230.0,100.0 L300.0,90.0 L290.0,140.0 L240.0,150.0 Z" fill="#d5edd3" /><path d="M510.0,230.0 L560.0,220.0 L560.0,260.0 L520.0,270.0 Z" fill="#d5edd3" /><path d="M0.0,640.0 L40.0,650.0 L30.0,720.0 L0.0,700.0 Z" fill="#d5edd3" /><path d="M180.0,760.0 L220.0,750.0 L230.0,800.0 L190.0,810.0 Z" fill="#d5edd3" /><path d="M0.0,1330.0 L30.0,1340.0 L40.0,1420.0 L10.0,1430.0 Z" fill="#d5edd3" /><path d="M950.0,1120.0 L1010.0,1100.0 L1040.0,1160.0 L1000.0,1230.0 L940.0,1220.0 Z" fill="#d5edd3" /><path d="M1614.6,0.0 L2076.0,0.0 L2076.0,1534.0 L921.7,1534.0 L960.0,1484.7 L976.0,1449.7 L1014.0,1421.0 L1071.3,1446.7 L1116.0,1418.0 L1119.2,1392.5 L1090.5,1395.5 L1074.6,1363.8 L1055.3,1328.8 L1058.5,1306.5 L1103.0,1274.8 L1128.4,1281.2 L1134.8,1309.8 L1128.4,1341.7 L1150.8,1357.5 L1173.2,1325.8 L1176.4,1290.8 L1134.8,1268.5 L1112.6,1246.2 L1115.9,1224.0 L1125.0,1201.0 L1115.9,1191.8 L1103.0,1173.0 L1090.5,1166.6 L1109.5,1150.6 L1134.8,1115.7 L1163.0,1069.7 L1178.3,1029.5 L1183.3,979.0 L1208.5,934.0 L1198.3,894.0 L1228.3,849.0 L1218.5,809.0 L1223.5,769.0 L1233.5,711.0 L1253.0,671.6 L1288.6,616.5 L1323.6,576.7 L1364.0,541.0 L1399.0,501.7 L1409.0,471.0 L1444.0,441.0 L1464.0,396.0 L1479.0,330.6 L1489.0,280.6 L1499.0,210.5 L1509.0,150.0 L1519.0,95.0 L1499.0,75.0 L1519.0,45.0 L1564.0,25.0 Z" fill="#aad9fe" /><path d="M1150.0,900.0 L1165.0,850.0 L1195.0,830.0 L1212.0,850.0 L1198.0,894.0 L1180.0,910.0 Z" fill="#aad9fe" /><path d="M1384.0,430.0 L1420.0,400.0 L1460.0,397.0 L1470.0,430.0 L1450.0,461.0 L1400.0,461.0 Z" fill="#aad9fe" /><path d="M1380.0,40.0 L1430.0,20.0 L1470.0,60.0 L1500.0,100.0 L1490.0,126.0 L1450.0,110.0 L1420.0,80.0 L1390.0,70.0 Z" fill="#aad9fe" /><path d="M1339.0,300.0 L1380.0,310.0 L1420.0,300.0 L1470.0,305.0" fill="none" stroke="#aad9fe" stroke-width="7" stroke-linejoin="round" stroke-linecap="round" /><path d="M1520.0,20.0 L1570.0,10.0 L1560.0,60.0 L1530.0,90.0 L1500.0,70.0 Z" fill="#aad9fe" /><path d="M972.6,1357.5 L1045.7,1363.8 L1045.7,1389.0 L1023.6,1408.4 L1001.3,1402.0 L972.6,1385.3 Z" fill="#aad9fe" /><path d="M160.3,1270.2 L175.5,1270.2 L185.5,1305.2 L205.7,1310.2 L225.5,1330.2 L215.3,1360.3 L220.5,1395.5 L190.3,1450.5 L165.3,1450.5 L155.3,1370.5 L152.8,1320.2 Z" fill="#aad9fe" /><path d="M355.0,1305.0 L385.0,1300.0 L372.0,1340.0 Z" fill="#aad9fe" /><path d="M822.0,333.5 L852.0,353.6 L862.0,378.6 L877.0,388.6 L882.0,413.7 L897.0,433.7 L882.0,463.8 L872.0,494.0 L897.0,514.0 L842.0,529.0 L822.0,564.0 L807.0,584.0" fill="none" stroke="#aad9fe" stroke-width="9" stroke-linejoin="round" stroke-linecap="round" /><path d="M897.0,433.7 L907.0,393.6 L997.0,338.5" fill="none" stroke="#aad9fe" stroke-width="6" stroke-linejoin="round" stroke-linecap="round" /><path d="M0.0,1030.0 L120.0,1010.0 L230.0,1060.0 L330.0,1030.0 L400.0,1060.0" fill="none" stroke="#ffffff" stroke-width="3" stroke-linejoin="round" stroke-linecap="round" /><path d="M200.0,690.0 L250.0,820.0 L300.0,960.0 L350.0,1160.0 L420.0,1260.0 L460.0,1534.0" fill="none" stroke="#ffffff" stroke-width="3" stroke-linejoin="round" stroke-linecap="round" /><path d="M100.0,560.0 L120.0,700.0 L110.0,900.0 L140.0,1200.0 L120.0,1534.0" fill="none" stroke="#ffffff" stroke-width="3" stroke-linejoin="round" stroke-linecap="round" /><path d="M350.0,120.0 L300.0,300.0 L240.0,520.0 L250.0,640.0" fill="none" stroke="#ffffff" stroke-width="3" stroke-linejoin="round" stroke-linecap="round" /><path d="M600.0,520.0 L560.0,640.0 L520.0,760.0" fill="none" stroke="#ffffff" stroke-width="3" stroke-linejoin="round" stroke-linecap="round" /><path d="M420.0,540.0 L460.0,660.0 L470.0,760.0 L430.0,900.0 L420.0,1000.0" fill="none" stroke="#ffffff" stroke-width="3" stroke-linejoin="round" stroke-linecap="round" /><path d="M0.0,380.0 L120.0,340.0 L180.0,300.0" fill="none" stroke="#ffffff" stroke-width="3" stroke-linejoin="round" stroke-linecap="round" /><path d="M700.0,700.0 L660.0,860.0 L640.0,960.0" fill="none" stroke="#ffffff" stroke-width="3" stroke-linejoin="round" stroke-linecap="round" /><path d="M850.0,1534.0 L900.0,1420.0 L940.0,1300.0" fill="none" stroke="#ffffff" stroke-width="3" stroke-linejoin="round" stroke-linecap="round" /><path d="M1110.0,120.0 L1150.0,200.0 L1140.0,300.0" fill="none" stroke="#ffffff" stroke-width="3" stroke-linejoin="round" stroke-linecap="round" /><path d="M1250.0,150.0 L1270.0,250.0 L1230.0,330.0" fill="none" stroke="#ffffff" stroke-width="3" stroke-linejoin="round" stroke-linecap="round" /><path d="M1300.0,250.0 L1350.0,290.0 L1330.0,360.0" fill="none" stroke="#ffffff" stroke-width="3" stroke-linejoin="round" stroke-linecap="round" /><path d="M1200.0,300.0 L1260.0,330.0 L1280.0,400.0" fill="none" stroke="#ffffff" stroke-width="3" stroke-linejoin="round" stroke-linecap="round" /><path d="M1120.0,400.0 L1180.0,430.0 L1230.0,420.0" fill="none" stroke="#ffffff" stroke-width="3" stroke-linejoin="round" stroke-linecap="round" /><path d="M1380.0,250.0 L1400.0,300.0 L1390.0,350.0" fill="none" stroke="#ffffff" stroke-width="3" stroke-linejoin="round" stroke-linecap="round" /><path d="M1340.0,120.0 L1380.0,180.0 L1420.0,230.0" fill="none" stroke="#ffffff" stroke-width="3" stroke-linejoin="round" stroke-linecap="round" /><path d="M0.0,1102.0 L120.3,1127.3 L240.6,1112.2 L300.7,1114.7 L320.8,1104.7 L401.0,1089.7 L426.0,1064.6 L451.0,1054.6 L491.0,1064.6 L536.0,1062.0 L571.0,1052.0 L621.5,1009.5 L691.7,964.4 L726.7,961.9 L761.8,924.3 L766.8,904.2 L802.0,855.0 L827.0,824.0 L862.0,809.0 L902.5,788.6 L945.0,758.2 L978.4,721.8 L1030.0,658.1 L1069.4,609.6 L1099.7,576.2 L1111.8,545.9 L1138.0,481.0 L1163.0,441.0 L1188.4,411.0 L1228.5,381.0 L1298.6,371.0 L1388.8,325.8 L1434.0,320.8" fill="none" stroke="#f4c253" stroke-width="14" stroke-linejoin="round" stroke-linecap="round" /><path d="M0.0,1102.0 L120.3,1127.3 L240.6,1112.2 L300.7,1114.7 L320.8,1104.7 L401.0,1089.7 L426.0,1064.6 L451.0,1054.6 L491.0,1064.6 L536.0,1062.0 L571.0,1052.0 L621.5,1009.5 L691.7,964.4 L726.7,961.9 L761.8,924.3 L766.8,904.2 L802.0,855.0 L827.0,824.0 L862.0,809.0 L902.5,788.6 L945.0,758.2 L978.4,721.8 L1030.0,658.1 L1069.4,609.6 L1099.7,576.2 L1111.8,545.9 L1138.0,481.0 L1163.0,441.0 L1188.4,411.0 L1228.5,381.0 L1298.6,371.0 L1388.8,325.8 L1434.0,320.8" fill="none" stroke="#fde598" stroke-width="11" stroke-linejoin="round" stroke-linecap="round" /><path d="M1434.0,320.8 L1439.0,381.0 L1399.0,411.0 L1364.0,436.0 L1318.7,466.0 L1283.6,501.0 L1278.6,551.3 L1263.5,601.5 L1238.5,651.6 L1208.4,711.7 L1195.0,768.8 L1208.4,809.0 L1170.0,840.0 L1138.0,859.0 L1133.2,909.2 L1173.3,934.3 L1178.3,1009.5 L1158.3,1059.6 L1118.2,1069.6 L1068.0,1084.7 L1038.0,1114.7 L1007.4,1184.9 L1002.4,1270.0 L987.4,1335.3 L952.3,1350.3 L902.2,1420.5 L887.1,1534.0" fill="none" stroke="#f4c253" stroke-width="14" stroke-linejoin="round" stroke-linecap="round" /><path d="M1434.0,320.8 L1439.0,381.0 L1399.0,411.0 L1364.0,436.0 L1318.7,466.0 L1283.6,501.0 L1278.6,551.3 L1263.5,601.5 L1238.5,651.6 L1208.4,711.7 L1195.0,768.8 L1208.4,809.0 L1170.0,840.0 L1138.0,859.0 L1133.2,909.2 L1173.3,934.3 L1178.3,1009.5 L1158.3,1059.6 L1118.2,1069.6 L1068.0,1084.7 L1038.0,1114.7 L1007.4,1184.9 L1002.4,1270.0 L987.4,1335.3 L952.3,1350.3 L902.2,1420.5 L887.1,1534.0" fill="none" stroke="#fde598" stroke-width="11" stroke-linejoin="round" stroke-linecap="round" /><path d="M660.0,0.0 L688.1,26.3 L749.6,79.0 L784.7,140.5 L786.5,184.4 L846.2,189.7 L863.7,203.7 L898.9,193.2 L916.4,207.2 L960.3,175.6 L995.5,184.4 L1013.0,210.8 L1030.6,228.3 L1111.0,238.3 L1188.4,250.6 L1268.6,280.7 L1338.7,320.8 L1388.8,325.8" fill="none" stroke="#f4c253" stroke-width="10" stroke-linejoin="round" stroke-linecap="round" /><path d="M660.0,0.0 L688.1,26.3 L749.6,79.0 L784.7,140.5 L786.5,184.4 L846.2,189.7 L863.7,203.7 L898.9,193.2 L916.4,207.2 L960.3,175.6 L995.5,184.4 L1013.0,210.8 L1030.6,228.3 L1111.0,238.3 L1188.4,250.6 L1268.6,280.7 L1338.7,320.8 L1388.8,325.8" fill="none" stroke="#fde598" stroke-width="7" stroke-linejoin="round" stroke-linecap="round" /><path d="M310.7,1114.7 L275.7,1149.8 L250.6,1195.0 L190.5,1210.0 L165.4,1250.0 L150.4,1295.2 L150.4,1365.3 L125.3,1385.4 L100.2,1420.5 L50.1,1435.5 L0.0,1470.6" fill="none" stroke="#f4c253" stroke-width="12" stroke-linejoin="round" stroke-linecap="round" /><path d="M310.7,1114.7 L275.7,1149.8 L250.6,1195.0 L190.5,1210.0 L165.4,1250.0 L150.4,1295.2 L150.4,1365.3 L125.3,1385.4 L100.2,1420.5 L50.1,1435.5 L0.0,1470.6" fill="none" stroke="#fde598" stroke-width="9" stroke-linejoin="round" stroke-linecap="round" /><path d="M763.0,925.0 L854.0,894.7 L872.2,910.0 L984.4,931.1 L1102.7,919.0 L1136.1,900.8 L1175.5,925.0" fill="none" stroke="#f4c253" stroke-width="10" stroke-linejoin="round" stroke-linecap="round" /><path d="M763.0,925.0 L854.0,894.7 L872.2,910.0 L984.4,931.1 L1102.7,919.0 L1136.1,900.8 L1175.5,925.0" fill="none" stroke="#fde598" stroke-width="7" stroke-linejoin="round" stroke-linecap="round" /><path d="M767.0,0.0 L835.6,70.3 L912.9,26.3 L951.5,8.8 L1030.6,26.3 L1032.3,45.7 L1109.6,91.3" fill="none" stroke="#f4c253" stroke-width="8" stroke-linejoin="round" stroke-linecap="round" /><path d="M767.0,0.0 L835.6,70.3 L912.9,26.3 L951.5,8.8 L1030.6,26.3 L1032.3,45.7 L1109.6,91.3" fill="none" stroke="#fde598" stroke-width="5" stroke-linejoin="round" stroke-linecap="round" /><path d="M1038.0,222.5 L1077.0,246.6 L1122.0,252.6 L1194.4,261.6 L1293.6,282.7 L1338.7,309.8 L1377.8,324.8 L1429.0,330.8" fill="none" stroke="#f4c253" stroke-width="12" stroke-linejoin="round" stroke-linecap="round" /><path d="M1038.0,222.5 L1077.0,246.6 L1122.0,252.6 L1194.4,261.6 L1293.6,282.7 L1338.7,309.8 L1377.8,324.8 L1429.0,330.8" fill="none" stroke="#fde598" stroke-width="9" stroke-linejoin="round" stroke-linecap="round" /><path d="M1179.3,207.5 L1170.3,339.8 L1200.4,378.9 L1194.4,461.3" fill="none" stroke="#f4c253" stroke-width="12" stroke-linejoin="round" stroke-linecap="round" /><path d="M1179.3,207.5 L1170.3,339.8 L1200.4,378.9 L1194.4,461.3" fill="none" stroke="#fde598" stroke-width="9" stroke-linejoin="round" stroke-linecap="round" /><path d="M1182.0,207.5 L1233.5,210.5 L1272.6,231.6 L1323.7,225.5 L1362.8,231.6 L1383.9,249.6 L1429.0,330.8" fill="none" stroke="#f4c253" stroke-width="12" stroke-linejoin="round" stroke-linecap="round" /><path d="M1182.0,207.5 L1233.5,210.5 L1272.6,231.6 L1323.7,225.5 L1362.8,231.6 L1383.9,249.6 L1429.0,330.8" fill="none" stroke="#fde598" stroke-width="9" stroke-linejoin="round" stroke-linecap="round" /><path d="M1417.0,0.0 L1426.0,30.0 L1420.0,78.2 L1368.8,156.4 L1362.8,192.5 L1323.7,216.5" fill="none" stroke="#f4c253" stroke-width="12" stroke-linejoin="round" stroke-linecap="round" /><path d="M1417.0,0.0 L1426.0,30.0 L1420.0,78.2 L1368.8,156.4 L1362.8,192.5 L1323.7,216.5" fill="none" stroke="#fde598" stroke-width="9" stroke-linejoin="round" stroke-linecap="round" /><path d="M1200.4,385.0 L1248.5,378.9 L1308.7,378.9 L1398.9,378.9 L1425.9,372.9 L1438.0,303.7" fill="none" stroke="#f4c253" stroke-width="12" stroke-linejoin="round" stroke-linecap="round" /><path d="M1200.4,385.0 L1248.5,378.9 L1308.7,378.9 L1398.9,378.9 L1425.9,372.9 L1438.0,303.7" fill="none" stroke="#fde598" stroke-width="9" stroke-linejoin="round" stroke-linecap="round" /><path d="M1092.0,171.4 L1161.3,99.2 L1170.3,54.0 L1155.3,12.0 L1158.0,0.0" fill="none" stroke="#f4c253" stroke-width="8" stroke-linejoin="round" stroke-linecap="round" /><path d="M1092.0,171.4 L1161.3,99.2 L1170.3,54.0 L1155.3,12.0 L1158.0,0.0" fill="none" stroke="#fde598" stroke-width="5" stroke-linejoin="round" stroke-linecap="round" /><path d="M1092.0,171.4 L1083.0,234.6 L1068.0,279.7 L1077.0,324.8 L1098.0,376.0 L1101.0,461.3" fill="none" stroke="#f4c253" stroke-width="8" stroke-linejoin="round" stroke-linecap="round" /><path d="M1092.0,171.4 L1083.0,234.6 L1068.0,279.7 L1077.0,324.8 L1098.0,376.0 L1101.0,461.3" fill="none" stroke="#fde598" stroke-width="5" stroke-linejoin="round" stroke-linecap="round" /><path d="M1233.5,309.8 L1260.5,288.7 L1278.6,261.6" fill="none" stroke="#f4c253" stroke-width="8" stroke-linejoin="round" stroke-linecap="round" /><path d="M1233.5,309.8 L1260.5,288.7 L1278.6,261.6" fill="none" stroke="#fde598" stroke-width="5" stroke-linejoin="round" stroke-linecap="round" /><path d="M1164.3,99.2 L1206.4,147.4 L1233.5,174.4 L1240.0,210.0" fill="none" stroke="#f4c253" stroke-width="8" stroke-linejoin="round" stroke-linecap="round" /><path d="M1164.3,99.2 L1206.4,147.4 L1233.5,174.4 L1240.0,210.0" fill="none" stroke="#fde598" stroke-width="5" stroke-linejoin="round" stroke-linecap="round" /><path d="M1038.0,45.0 L1068.0,54.0 L1110.0,90.2 L1164.3,99.2" fill="none" stroke="#f4c253" stroke-width="8" stroke-linejoin="round" stroke-linecap="round" /><path d="M1038.0,45.0 L1068.0,54.0 L1110.0,90.2 L1164.3,99.2" fill="none" stroke="#fde598" stroke-width="5" stroke-linejoin="round" stroke-linecap="round" /><path d="M1398.9,210.5 L1408.0,168.4 L1468.0,162.4 L1499.3,162.4" fill="none" stroke="#f4c253" stroke-width="8" stroke-linejoin="round" stroke-linecap="round" /><path d="M1398.9,210.5 L1408.0,168.4 L1468.0,162.4 L1499.3,162.4" fill="none" stroke="#fde598" stroke-width="5" stroke-linejoin="round" stroke-linecap="round" /><path d="M1429.0,240.6 L1477.0,228.6 L1499.0,225.0" fill="none" stroke="#f4c253" stroke-width="8" stroke-linejoin="round" stroke-linecap="round" /><path d="M1429.0,240.6 L1477.0,228.6 L1499.0,225.0" fill="none" stroke="#fde598" stroke-width="5" stroke-linejoin="round" stroke-linecap="round" /><path d="M1438.0,318.8 L1438.0,378.9 L1423.0,391.0 L1368.8,421.0 L1338.7,461.3" fill="none" stroke="#f4c253" stroke-width="8" stroke-linejoin="round" stroke-linecap="round" /><path d="M1438.0,318.8 L1438.0,378.9 L1423.0,391.0 L1368.8,421.0 L1338.7,461.3" fill="none" stroke="#fde598" stroke-width="5" stroke-linejoin="round" stroke-linecap="round" /><path d="M1360.0,260.0 L1400.0,290.0 L1430.0,300.0" fill="none" stroke="#f4c253" stroke-width="8" stroke-linejoin="round" stroke-linecap="round" /><path d="M1360.0,260.0 L1400.0,290.0 L1430.0,300.0" fill="none" stroke="#fde598" stroke-width="5" stroke-linejoin="round" stroke-linecap="round" /><path d="M1390.0,230.0 L1420.0,260.0 L1460.0,270.0" fill="none" stroke="#f4c253" stroke-width="8" stroke-linejoin="round" stroke-linecap="round" /><path d="M1390.0,230.0 L1420.0,260.0 L1460.0,270.0" fill="none" stroke="#fde598" stroke-width="5" stroke-linejoin="round" stroke-linecap="round" /><path d="M1350.0,350.0 L1400.0,340.0 L1440.0,350.0" fill="none" stroke="#f4c253" stroke-width="8" stroke-linejoin="round" stroke-linecap="round" /><path d="M1350.0,350.0 L1400.0,340.0 L1440.0,350.0" fill="none" stroke="#fde598" stroke-width="5" stroke-linejoin="round" stroke-linecap="round" /><path d="M1300.0,240.0 L1330.0,280.0 L1320.0,330.0" fill="none" stroke="#f4c253" stroke-width="8" stroke-linejoin="round" stroke-linecap="round" /><path d="M1300.0,240.0 L1330.0,280.0 L1320.0,330.0" fill="none" stroke="#fde598" stroke-width="5" stroke-linejoin="round" stroke-linecap="round" /><path d="M1400.0,395.0 L1420.0,420.0" fill="none" stroke="#f4c253" stroke-width="8" stroke-linejoin="round" stroke-linecap="round" /><path d="M1400.0,395.0 L1420.0,420.0" fill="none" stroke="#fde598" stroke-width="5" stroke-linejoin="round" stroke-linecap="round" /><path d="M1460.0,250.0 L1480.0,290.0 L1470.0,330.0" fill="none" stroke="#f4c253" stroke-width="8" stroke-linejoin="round" stroke-linecap="round" /><path d="M1460.0,250.0 L1480.0,290.0 L1470.0,330.0" fill="none" stroke="#fde598" stroke-width="5" stroke-linejoin="round" stroke-linecap="round" /><path d="M1380.0,360.0 L1390.0,400.0" fill="none" stroke="#f4c253" stroke-width="8" stroke-linejoin="round" stroke-linecap="round" /><path d="M1380.0,360.0 L1390.0,400.0" fill="none" stroke="#fde598" stroke-width="5" stroke-linejoin="round" stroke-linecap="round" /><path d="M1250.0,340.0 L1290.0,330.0 L1330.0,345.0" fill="none" stroke="#f4c253" stroke-width="8" stroke-linejoin="round" stroke-linecap="round" /><path d="M1250.0,340.0 L1290.0,330.0 L1330.0,345.0" fill="none" stroke="#fde598" stroke-width="5" stroke-linejoin="round" stroke-linecap="round" /><path d="M878.3,843.2 L854.0,894.7" fill="none" stroke="#f4c253" stroke-width="8" stroke-linejoin="round" stroke-linecap="round" /><path d="M878.3,843.2 L854.0,894.7" fill="none" stroke="#fde598" stroke-width="5" stroke-linejoin="round" stroke-linecap="round" /><path d="M878.0,843.0 L920.0,870.0 L930.0,930.0 L960.0,1020.0 L1000.0,1100.0 L1007.0,1185.0" fill="none" stroke="#f4c253" stroke-width="8" stroke-linejoin="round" stroke-linecap="round" /><path d="M878.0,843.0 L920.0,870.0 L930.0,930.0 L960.0,1020.0 L1000.0,1100.0 L1007.0,1185.0" fill="none" stroke="#fde598" stroke-width="5" stroke-linejoin="round" stroke-linecap="round" /><path d="M1136.0,900.0 L1120.0,820.0 L1080.0,720.0 L1060.0,640.0" fill="none" stroke="#f4c253" stroke-width="8" stroke-linejoin="round" stroke-linecap="round" /><path d="M1136.0,900.0 L1120.0,820.0 L1080.0,720.0 L1060.0,640.0" fill="none" stroke="#fde598" stroke-width="5" stroke-linejoin="round" stroke-linecap="round" /><path d="M65.0,37.6 L90.0,10.0 L165.4,10.0 L180.4,0.0" fill="none" stroke="#f4c253" stroke-width="8" stroke-linejoin="round" stroke-linecap="round" /><path d="M65.0,37.6 L90.0,10.0 L165.4,10.0 L180.4,0.0" fill="none" stroke="#fde598" stroke-width="5" stroke-linejoin="round" stroke-linecap="round" /><path d="M1080.0,1000.0 L1100.0,1060.0 L1150.0,1090.0" fill="none" stroke="#f4c253" stroke-width="8" stroke-linejoin="round" stroke-linecap="round" /><path d="M1080.0,1000.0 L1100.0,1060.0 L1150.0,1090.0" fill="none" stroke="#fde598" stroke-width="5" stroke-linejoin="round" stroke-linecap="round" /><path d="M1000.0,960.0 L1060.0,1000.0 L1090.0,1050.0" fill="none" stroke="#f4c253" stroke-width="8" stroke-linejoin="round" stroke-linecap="round" /><path d="M1000.0,960.0 L1060.0,1000.0 L1090.0,1050.0" fill="none" stroke="#fde598" stroke-width="5" stroke-linejoin="round" stroke-linecap="round" /><path d="M0.0,1420.0 L80.0,1460.0 L200.0,1470.0" fill="none" stroke="#f4c253" stroke-width="8" stroke-linejoin="round" stroke-linecap="round" /><path d="M0.0,1420.0 L80.0,1460.0 L200.0,1470.0" fill="none" stroke="#fde598" stroke-width="5" stroke-linejoin="round" stroke-linecap="round" /><path d="M250.0,1480.0 L330.0,1470.0 L370.0,1534.0" fill="none" stroke="#f4c253" stroke-width="8" stroke-linejoin="round" stroke-linecap="round" /><path d="M250.0,1480.0 L330.0,1470.0 L370.0,1534.0" fill="none" stroke="#fde598" stroke-width="5" stroke-linejoin="round" stroke-linecap="round" /></svg>
<div class="ab" style="left:739px;top:161px;width:14px;height:14px;box-sizing:border-box;border-radius:50%;background:#f4f4f4;border:2.5px solid #202124"></div>
<div class="ab" style="left:625.3000000000002px;top:406.5999999999999px;width:12px;height:12px;box-sizing:border-box;border-radius:50%;background:#f4f4f4;border:2.5px solid #3c3c3c"></div>
<div class="ab" style="left:453.70000000000005px;top:431.29999999999995px;width:9.0px;height:9.0px;box-sizing:border-box;border-radius:50%;background:#f4f4f4;border:1.8px solid #5f6368"></div>
<div class="ab" style="left:608.5px;top:517.3px;width:9.0px;height:9.0px;box-sizing:border-box;border-radius:50%;background:#f4f4f4;border:1.8px solid #5f6368"></div>
<div class="ab" style="left:201.5px;top:550.5px;width:9.0px;height:9.0px;box-sizing:border-box;border-radius:50%;background:#f4f4f4;border:1.8px solid #5f6368"></div>
<div class="ab" style="left:519px;top:610px;width:10px;height:10px;box-sizing:border-box;border-radius:50%;background:#f4f4f4;border:2.2px solid #3c3c3c"></div>
<div class="ab" style="left:730.4px;top:81.4px;width:33.3px;height:21.1px;background:#699f3e;color:#fff;font:700 18px/21.1px 'Liberation Sans',sans-serif;text-align:center;box-shadow:0 0 0 1.5px rgba(255,255,255,.7)">A3</div>
<div class="ab" style="left:583.0px;top:122.6px;width:38.6px;height:20.8px;background:#699f3e;color:#fff;font:700 18px/20.8px 'Liberation Sans',sans-serif;text-align:center;box-shadow:0 0 0 1.5px rgba(255,255,255,.7)">M4</div>
<div class="ab" style="left:642.0px;top:190.3px;width:38.8px;height:21.4px;background:#699f3e;color:#fff;font:700 18px/21.4px 'Liberation Sans',sans-serif;text-align:center;box-shadow:0 0 0 1.5px rgba(255,255,255,.7)">M5</div>
<div class="ab" style="left:581.0px;top:227.4px;width:49.0px;height:21.1px;background:#699f3e;color:#fff;font:700 18px/21.1px 'Liberation Sans',sans-serif;text-align:center;box-shadow:0 0 0 1.5px rgba(255,255,255,.7)">M31</div>
<div class="ab" style="left:632.0px;top:313.0px;width:38.0px;height:21.8px;background:#699f3e;color:#fff;font:700 18px/21.8px 'Liberation Sans',sans-serif;text-align:center;box-shadow:0 0 0 1.5px rgba(255,255,255,.7)">M1</div>
<div class="ab" style="left:492.4px;top:355.3px;width:47.6px;height:21.5px;background:#699f3e;color:#fff;font:700 18px/21.5px 'Liberation Sans',sans-serif;text-align:center;box-shadow:0 0 0 1.5px rgba(255,255,255,.7)">M31</div>
<div class="ab" style="left:591.0px;top:422.0px;width:38.0px;height:21.7px;background:#699f3e;color:#fff;font:700 18px/21.7px 'Liberation Sans',sans-serif;text-align:center;box-shadow:0 0 0 1.5px rgba(255,255,255,.7)">M1</div>
<div class="ab" style="left:528.0px;top:466.3px;width:45.0px;height:21.6px;background:#699f3e;color:#fff;font:700 18px/21.6px 'Liberation Sans',sans-serif;text-align:center;box-shadow:0 0 0 1.5px rgba(255,255,255,.7)">A48</div>
<div class="ab" style="left:310.3px;top:504.3px;width:48.2px;height:21.4px;background:#699f3e;color:#fff;font:700 18px/21.4px 'Liberation Sans',sans-serif;text-align:center;box-shadow:0 0 0 1.5px rgba(255,255,255,.7)">M31</div>
<div class="ab" style="left:19.0px;top:565.0px;width:48.8px;height:21.7px;background:#699f3e;color:#fff;font:700 18px/21.7px 'Liberation Sans',sans-serif;text-align:center;box-shadow:0 0 0 1.5px rgba(255,255,255,.7)">M31</div>
<div class="ab" style="left:103.0px;top:609.0px;width:48.8px;height:21.8px;background:#699f3e;color:#fff;font:700 18px/21.8px 'Liberation Sans',sans-serif;text-align:center;box-shadow:0 0 0 1.5px rgba(255,255,255,.7)">M23</div>
<div class="ab" style="left:462.0px;top:711.0px;width:34.0px;height:21.7px;background:#699f3e;color:#fff;font:700 18px/21.7px 'Liberation Sans',sans-serif;text-align:center;box-shadow:0 0 0 1.5px rgba(255,255,255,.7)">A1</div>
<div class="ab" style="left:-20.0px;top:37.3px;width:39.6px;height:21.4px;background:#699f3e;color:#fff;font:700 18px/21.4px 'Liberation Sans',sans-serif;text-align:center;box-shadow:0 0 0 1.5px rgba(255,255,255,.7)">M41</div><div class="ab" style="left:20px;top:20px;width:336px;height:80px;background:#fff;border-radius:3px;box-shadow:0 1px 4px -1px rgba(0,0,0,0.3)"></div>
<div class="ab" style="left:158px;top:20px;width:1px;height:80px;background:#e6e6e6"></div>
<div class="ab" style="left:980px;top:20px;width:80px;height:80px;background:#fff;border-radius:3px;box-shadow:0 1px 4px -1px rgba(0,0,0,0.3)"></div>
<svg class="ab" style="left:1002px;top:41.5px" width="36" height="36" viewBox="0 0 36 36"><path d="M2 12V2H12M24 2H34V12M34 24V34H24M12 34H2V24" fill="none" stroke="#666" stroke-width="4"/></svg>
<div class="ab" style="left:980px;top:446px;width:80px;height:80px;background:#fff;border-radius:3px;box-shadow:0 1px 4px -1px rgba(0,0,0,0.3)"></div>
<svg class="ab" style="left:1000px;top:455px" width="40" height="62" viewBox="0 0 40 62"><circle cx="19" cy="12.5" r="10.5" fill="#fbbc04" stroke="#6f6f6f" stroke-width="1.5"/><path d="M8 25Q19 21 30 25L36 45L32 46L28 36V59H21V46H17V59H10V36L6 46L2 45Z" fill="#fbbc04" stroke="#6f6f6f" stroke-width="1.5" stroke-linejoin="round"/><path d="M12 24L19 34L26 24Z" fill="#e37400"/></svg>
<div class="ab" style="left:980px;top:590px;width:80px;height:161px;background:#fff;border-radius:3px;box-shadow:0 1px 4px -1px rgba(0,0,0,0.3)"></div>
<div class="ab" style="left:990px;top:670px;width:60px;height:2px;background:#e6e6e6"></div>
<div class="ab" style="left:1001.8px;top:625.7px;width:36px;height:9px;background:#666"></div>
<div class="ab" style="left:1015.3px;top:612px;width:9px;height:36px;background:#666"></div>
<div class="ab" style="left:1002px;top:707.5px;width:36px;height:9px;background:#666"></div>
<svg class="ab" style="left:510px;top:313px" width="56" height="89" viewBox="0 0 56 89"><path d="M28 2.5C13.5 2.5 3 13 3 27C3 45 22 57 28 86C34 57 53 45 53 27C53 13 42.5 2.5 28 2.5Z" fill="#ea4335" stroke="#fff" stroke-width="2.5"/><circle cx="28" cy="27.8" r="8.8" fill="#7b1510"/></svg>
<div class="ab" style="left:500.3px;top:772.2px;width:580px;height:27px;background:rgba(245,245,245,0.7)"></div>
<div class="ab" style="left:741.4px;top:772.2px;width:2px;height:27px;background:#aadaff"></div>
<div class="ab" style="left:890.9px;top:772.2px;width:2px;height:27px;background:#aadaff"></div>
</div>
<div class="tx" style="left:435.4px;top:450.0px;font-family:'Liberation Mono';font-size:73.5px;line-height:73.5px;font-weight:400;color:#333333;transform:scaleX(0.9763);-webkit-text-stroke:0.9px #fff;">Latest Jobs Near You</div>
<div class="tx" style="left:481.3px;top:687.5px;font-family:'Liberation Sans';font-size:39px;line-height:39px;font-weight:400;color:#444444;transform:scaleX(1.0617);-webkit-text-stroke:1.1px #fff;">Need Workers for this</div>
<div class="tx" style="left:482.0px;top:739.8px;font-family:'Liberation Sans';font-size:39px;line-height:39px;font-weight:400;color:#444444;transform:scaleX(1.0326);-webkit-text-stroke:1.1px #fff;">year's corn harvest</div>
<div class="tx" style="left:481.3px;top:823.8px;font-family:'Liberation Sans';font-size:30.5px;line-height:30.5px;font-weight:400;color:#9c9c9c;transform:scaleX(1.1000);-webkit-text-stroke:0.95px #fff;">Lorem, ipsum dolor sit amet</div>
<div class="tx" style="left:482.4px;top:868.8px;font-family:'Liberation Sans';font-size:30.5px;line-height:30.5px;font-weight:400;color:#9c9c9c;transform:scaleX(1.1027);-webkit-text-stroke:0.95px #fff;">consectetur adipisicing elit.</div>
<div class="tx" style="left:481.3px;top:913.8px;font-family:'Liberation Sans';font-size:30.5px;line-height:30.5px;font-weight:400;color:#9c9c9c;transform:scaleX(1.1216);-webkit-text-stroke:0.95px #fff;">Nostrum in tenetur sed</div>
<div class="tx" style="left:482.4px;top:958.8px;font-family:'Liberation Sans';font-size:30.5px;line-height:30.5px;font-weight:400;color:#9c9c9c;transform:scaleX(1.1079);-webkit-text-stroke:0.95px #fff;">animi. Optio aspernatur non</div>
<div class="tx" style="left:481.3px;top:1003.8px;font-family:'Liberation Sans';font-size:30.5px;line-height:30.5px;font-weight:400;color:#9c9c9c;transform:scaleX(1.0849);-webkit-text-stroke:0.95px #fff;">iste. Voluptas cupiditate quis,</div>
<div class="tx" style="left:482.4px;top:1048.8px;font-family:'Liberation Sans';font-size:30.5px;line-height:30.5px;font-weight:400;color:#9c9c9c;transform:scaleX(1.0886);-webkit-text-stroke:0.95px #fff;">perspiciatis, exercitationem</div>
<div class="tx" style="left:482.4px;top:1093.8px;font-family:'Liberation Sans';font-size:30.5px;line-height:30.5px;font-weight:400;color:#9c9c9c;transform:scaleX(1.1475);-webkit-text-stroke:0.95px #fff;">quam deleniti commodi</div>
<div class="tx" style="left:482.4px;top:1138.8px;font-family:'Liberation Sans';font-size:30.5px;line-height:30.5px;font-weight:400;color:#9c9c9c;transform:scaleX(1.1204);-webkit-text-stroke:0.95px #fff;">dignissimos cumque</div>
<div class="tx" style="left:482.4px;top:1183.8px;font-family:'Liberation Sans';font-size:30.5px;line-height:30.5px;font-weight:400;color:#9c9c9c;transform:scaleX(1.1148);-webkit-text-stroke:0.95px #fff;">possimus totam rerum.</div>
<div class="tx" style="left:1051.3px;top:687.5px;font-family:'Liberation Sans';font-size:39px;line-height:39px;font-weight:400;color:#444444;transform:scaleX(1.0704);-webkit-text-stroke:1.1px #fff;">Need a mechanic for</div>
<div class="tx" style="left:1052.0px;top:739.8px;font-family:'Liberation Sans';font-size:39px;line-height:39px;font-weight:400;color:#444444;transform:scaleX(1.1104);-webkit-text-stroke:1.1px #fff;">fixing the tractor</div>
<div class="tx" style="left:1051.3px;top:823.8px;font-family:'Liberation Sans';font-size:30.5px;line-height:30.5px;font-weight:400;color:#9c9c9c;transform:scaleX(1.1000);-webkit-text-stroke:0.95px #fff;">Lorem, ipsum dolor sit amet</div>
<div class="tx" style="left:1052.4px;top:868.8px;font-family:'Liberation Sans';font-size:30.5px;line-height:30.5px;font-weight:400;color:#9c9c9c;transform:scaleX(1.1027);-webkit-text-stroke:0.95px #fff;">consectetur adipisicing elit.</div>
<div class="tx" style="left:1051.3px;top:913.8px;font-family:'Liberation Sans';font-size:30.5px;line-height:30.5px;font-weight:400;color:#9c9c9c;transform:scaleX(1.1216);-webkit-text-stroke:0.95px #fff;">Nostrum in tenetur sed</div>
<div class="tx" style="left:1052.4px;top:958.8px;font-family:'Liberation Sans';font-size:30.5px;line-height:30.5px;font-weight:400;color:#9c9c9c;transform:scaleX(1.1079);-webkit-text-stroke:0.95px #fff;">animi. Optio aspernatur non</div>
<div class="tx" style="left:1051.3px;top:1003.8px;font-family:'Liberation Sans';font-size:30.5px;line-height:30.5px;font-weight:400;color:#9c9c9c;transform:scaleX(1.0849);-webkit-text-stroke:0.95px #fff;">iste. Voluptas cupiditate quis,</div>
<div class="tx" style="left:1052.4px;top:1048.8px;font-family:'Liberation Sans';font-size:30.5px;line-height:30.5px;font-weight:400;color:#9c9c9c;transform:scaleX(1.0886);-webkit-text-stroke:0.95px #fff;">perspiciatis, exercitationem</div>
<div class="tx" style="left:1052.4px;top:1093.8px;font-family:'Liberation Sans';font-size:30.5px;line-height:30.5px;font-weight:400;color:#9c9c9c;transform:scaleX(1.1475);-webkit-text-stroke:0.95px #fff;">quam deleniti commodi</div>
<div class="tx" style="left:1052.4px;top:1138.8px;font-family:'Liberation Sans';font-size:30.5px;line-height:30.5px;font-weight:400;color:#9c9c9c;transform:scaleX(1.1204);-webkit-text-stroke:0.95px #fff;">dignissimos cumque</div>
<div class="tx" style="left:1052.4px;top:1183.8px;font-family:'Liberation Sans';font-size:30.5px;line-height:30.5px;font-weight:400;color:#9c9c9c;transform:scaleX(1.1148);-webkit-text-stroke:0.95px #fff;">possimus totam rerum.</div>
<div class="tx" style="left:481.3px;top:1460.5px;font-family:'Liberation Sans';font-size:39px;line-height:39px;font-weight:400;color:#444444;transform:scaleX(1.0757);-webkit-text-stroke:1.1px #fff;">Need an electrician</div>
<div class="tx" style="left:481.3px;top:1543.0px;font-family:'Liberation Sans';font-size:30.5px;line-height:30.5px;font-weight:400;color:#9c9c9c;transform:scaleX(1.0997);-webkit-text-stroke:0.95px #fff;">Lorem, ipsum dolor sit amet</div>
<div class="tx" style="left:482.4px;top:1588.0px;font-family:'Liberation Sans';font-size:30.5px;line-height:30.5px;font-weight:400;color:#9c9c9c;transform:scaleX(1.1013);-webkit-text-stroke:0.95px #fff;">consectetur adipisicing elit.</div>
<div class="tx" style="left:481.4px;top:1633.0px;font-family:'Liberation Sans';font-size:30.5px;line-height:30.5px;font-weight:400;color:#9c9c9c;transform:scaleX(1.0705);-webkit-text-stroke:0.95px #fff;">Ratione reiciendis culpa, sed</div>
<div class="tx" style="left:481.2px;top:1678.0px;font-family:'Liberation Sans';font-size:30.5px;line-height:30.5px;font-weight:400;color:#9c9c9c;transform:scaleX(1.1468);-webkit-text-stroke:0.95px #fff;">laudantium fugiat</div>
<div class="tx" style="left:482.4px;top:1723.0px;font-family:'Liberation Sans';font-size:30.5px;line-height:30.5px;font-weight:400;color:#9c9c9c;transform:scaleX(1.1055);-webkit-text-stroke:0.95px #fff;">aspernatur, iure nostrum</div>
<div class="tx" style="left:482.4px;top:1768.0px;font-family:'Liberation Sans';font-size:30.5px;line-height:30.5px;font-weight:400;color:#9c9c9c;transform:scaleX(1.1215);-webkit-text-stroke:0.95px #fff;">exercitationem neque totam</div>
<div class="tx" style="left:483.5px;top:1813.0px;font-family:'Liberation Sans';font-size:30.5px;line-height:30.5px;font-weight:400;color:#9c9c9c;transform:scaleX(1.1025);-webkit-text-stroke:0.95px #fff;">velit unde officiis similique</div>
<div class="tx" style="left:1051.3px;top:1460.5px;font-family:'Liberation Sans';font-size:39px;line-height:39px;font-weight:400;color:#444444;transform:scaleX(1.0747);-webkit-text-stroke:1.1px #fff;">Looking for an</div>
<div class="tx" style="left:1050.9px;top:1512.8px;font-family:'Liberation Sans';font-size:39px;line-height:39px;font-weight:400;color:#444444;transform:scaleX(1.0728);-webkit-text-stroke:1.1px #fff;">experienced tailer</div>
<div class="tx" style="left:1051.3px;top:1595.5px;font-family:'Liberation Sans';font-size:30.5px;line-height:30.5px;font-weight:400;color:#9c9c9c;transform:scaleX(1.0997);-webkit-text-stroke:0.95px #fff;">Lorem, ipsum dolor sit amet</div>
<div class="tx" style="left:1052.4px;top:1640.5px;font-family:'Liberation Sans';font-size:30.5px;line-height:30.5px;font-weight:400;color:#9c9c9c;transform:scaleX(1.1013);-webkit-text-stroke:0.95px #fff;">consectetur adipisicing elit.</div>
<div class="tx" style="left:1051.4px;top:1685.5px;font-family:'Liberation Sans';font-size:30.5px;line-height:30.5px;font-weight:400;color:#9c9c9c;transform:scaleX(1.0705);-webkit-text-stroke:0.95px #fff;">Ratione reiciendis culpa, sed</div>
<div class="tx" style="left:1051.2px;top:1730.5px;font-family:'Liberation Sans';font-size:30.5px;line-height:30.5px;font-weight:400;color:#9c9c9c;transform:scaleX(1.1468);-webkit-text-stroke:0.95px #fff;">laudantium fugiat</div>
<div class="tx" style="left:1052.4px;top:1775.5px;font-family:'Liberation Sans';font-size:30.5px;line-height:30.5px;font-weight:400;color:#9c9c9c;transform:scaleX(1.1055);-webkit-text-stroke:0.95px #fff;">aspernatur, iure nostrum</div>
<div class="tx" style="left:1052.4px;top:1820.5px;font-family:'Liberation Sans';font-size:30.5px;line-height:30.5px;font-weight:400;color:#9c9c9c;transform:scaleX(1.1215);-webkit-text-stroke:0.95px #fff;">exercitationem neque totam</div>
<div class="tx" style="left:1053.5px;top:1865.5px;font-family:'Liberation Sans';font-size:30.5px;line-height:30.5px;font-weight:400;color:#9c9c9c;transform:scaleX(1.1025);-webkit-text-stroke:0.95px #fff;">velit unde officiis similique</div>
<div class="tx" style="left:481.5px;top:1258.3px;font-family:'Liberation Sans';font-size:28.5px;line-height:28.5px;font-weight:400;color:#444444;transform:scaleX(1.0161);-webkit-text-stroke:0.5px #fff;">Pays - 10 / hr</div>
<div class="tx" style="left:802.3px;top:1276.0px;font-family:'Liberation Sans';font-size:24px;line-height:24px;font-weight:700;color:#c4053a;transform:scaleX(1.0453);">DETAILS</div>
<div class="tx" style="left:1051.4px;top:1258.3px;font-family:'Liberation Sans';font-size:28.5px;line-height:28.5px;font-weight:400;color:#444444;transform:scaleX(1.0281);-webkit-text-stroke:0.5px #fff;">Pays - 100 / hr</div>
<div class="tx" style="left:1372.3px;top:1276.0px;font-family:'Liberation Sans';font-size:24px;line-height:24px;font-weight:700;color:#c4053a;transform:scaleX(1.0453);">DETAILS</div>
<div class="tx" style="left:2024.9px;top:653.6px;font-family:'Liberation Sans';font-size:26px;line-height:26px;font-weight:400;color:#1b7a36;transform:scaleX(1.0408);text-shadow:0 0 2px #fff,0 0 2px #fff,0 0 3px #fff,0 0 4px #fff,0 0 1px #fff,0 0 5px rgba(255,255,255,.8);-webkit-text-stroke:0.5px #1b7a36;">Blue</div>
<div class="tx" style="left:1984.5px;top:681.5px;font-family:'Liberation Sans';font-size:26px;line-height:26px;font-weight:400;color:#1b7a36;transform:scaleX(1.1233);text-shadow:0 0 2px #fff,0 0 2px #fff,0 0 3px #fff,0 0 4px #fff,0 0 1px #fff,0 0 5px rgba(255,255,255,.8);-webkit-text-stroke:0.5px #1b7a36;">Mountains</div>
<div class="tx" style="left:1968.2px;top:708.8px;font-family:'Liberation Sans';font-size:26px;line-height:26px;font-weight:400;color:#1b7a36;transform:scaleX(1.0820);text-shadow:0 0 2px #fff,0 0 2px #fff,0 0 3px #fff,0 0 4px #fff,0 0 1px #fff,0 0 5px rgba(255,255,255,.8);-webkit-text-stroke:0.5px #1b7a36;">National Park</div>
<div class="tx" style="left:1823.7px;top:829.1px;font-family:'Liberation Sans';font-size:26px;line-height:26px;font-weight:400;color:#1b7a36;transform:scaleX(1.0597);text-shadow:0 0 2px #fff,0 0 2px #fff,0 0 3px #fff,0 0 4px #fff,0 0 1px #fff,0 0 5px rgba(255,255,255,.8);-webkit-text-stroke:0.5px #1b7a36;">Kanangra-Boyd</div>
<div class="tx" style="left:1835.3px;top:857.8px;font-family:'Liberation Sans';font-size:26px;line-height:26px;font-weight:400;color:#1b7a36;transform:scaleX(1.0762);text-shadow:0 0 2px #fff,0 0 2px #fff,0 0 3px #fff,0 0 4px #fff,0 0 1px #fff,0 0 5px rgba(255,255,255,.8);-webkit-text-stroke:0.5px #1b7a36;">National Park</div>
<div class="tx" style="left:2277.0px;top:763.8px;font-family:'Liberation Sans';font-size:31px;line-height:31px;font-weight:700;color:#3a3a3a;transform:scaleX(0.9187);text-shadow:0 0 2px #fff,0 0 2px #fff,0 0 3px #fff,0 0 4px #fff,0 0 1px #fff,0 0 5px rgba(255,255,255,.8);">Sydney</div>
<div class="tx" style="left:2142.3px;top:1014.8px;font-family:'Liberation Sans';font-size:26px;line-height:26px;font-weight:400;color:#333333;transform:scaleX(1.0430);text-shadow:0 0 2px #fff,0 0 2px #fff,0 0 3px #fff,0 0 4px #fff,0 0 1px #fff,0 0 5px rgba(255,255,255,.8);">Wollongong</div>
<div class="tx" style="left:2003.9px;top:1044.0px;font-family:'Liberation Sans';font-size:22px;line-height:22px;font-weight:400;color:#5f6368;transform:scaleX(1.0741);text-shadow:0 0 2px #fff,0 0 2px #fff,0 0 3px #fff,0 0 4px #fff,0 0 1px #fff,0 0 5px rgba(255,255,255,.8);">Bowral</div>
<div class="tx" style="left:2164.0px;top:1130.0px;font-family:'Liberation Sans';font-size:21px;line-height:21px;font-weight:400;color:#5f6368;transform:scaleX(1.0196);text-shadow:0 0 2px #fff,0 0 2px #fff,0 0 3px #fff,0 0 4px #fff,0 0 1px #fff,0 0 5px rgba(255,255,255,.8);">Kiama</div>
<div class="tx" style="left:1739.9px;top:1163.2px;font-family:'Liberation Sans';font-size:22px;line-height:22px;font-weight:400;color:#5f6368;transform:scaleX(1.0706);text-shadow:0 0 2px #fff,0 0 2px #fff,0 0 3px #fff,0 0 4px #fff,0 0 1px #fff,0 0 5px rgba(255,255,255,.8);">Goulburn</div>
<div class="tx" style="left:2066.3px;top:1218.5px;font-family:'Liberation Sans';font-size:25px;line-height:25px;font-weight:400;color:#3c3c3c;transform:scaleX(1.0578);text-shadow:0 0 2px #fff,0 0 2px #fff,0 0 3px #fff,0 0 4px #fff,0 0 1px #fff,0 0 5px rgba(255,255,255,.8);">Nowra</div>
<div class="tx" style="left:2329.6px;top:618.0px;font-family:'Liberation Sans';font-size:25px;line-height:25px;font-weight:400;color:#3c3c3c;transform:scaleX(1.0342);text-shadow:0 0 2px #fff,0 0 2px #fff,0 0 3px #fff,0 0 4px #fff,0 0 1px #fff,0 0 5px rgba(255,255,255,.8);clip-path:inset(26px 0 0 0);">Gosford</div>
<div class="tx" style="left:1582.1px;top:1403.5px;font-family:'Liberation Sans';font-size:25px;line-height:25px;font-weight:400;color:#3c3c3c;transform:scaleX(0.8954);text-shadow:0 0 2px #fff,0 0 2px #fff,0 0 3px #fff,0 0 4px #fff,0 0 1px #fff,0 0 5px rgba(255,255,255,.8);">erra</div>
<div class="tx" style="left:1635.0px;top:679.2px;font-family:'Liberation Sans';font-size:36px;line-height:36px;font-weight:700;color:#000000;transform:scaleX(0.9999);">Map</div>
<div class="tx" style="left:1775.0px;top:679.0px;font-family:'Liberation Sans';font-size:36px;line-height:36px;font-weight:400;color:#565656;transform:scaleX(1.0075);">Satellite</div>
<div class="tx" style="left:2091.4px;top:1413.5px;font-family:'Liberation Sans';font-size:20px;line-height:20px;font-weight:700;color:#444444;transform:scaleX(0.9658);">Map data ©2020 Google</div>
<div class="tx" style="left:2334.3px;top:1413.5px;font-family:'Liberation Sans';font-size:20px;line-height:20px;font-weight:400;color:#9a9a9a;transform:scaleX(1.0597);">Terms of Use</div>
<div class="tx" style="left:2484.0px;top:1413.5px;font-family:'Liberation Sans';font-size:20px;line-height:20px;font-weight:400;color:#444444;transform:scaleX(0.9739);">Report a map error</div>
<svg class="ab" style="left:1590px;top:1385px" width="136" height="50" viewBox="0 0 136 50"><g><path d="M30.2,11.4 A12.6,12.6 0 1 0 33.1,21" fill="none" stroke="#fff" stroke-width="6.9" stroke-opacity="0.75"/><rect x="21" y="19" width="14" height="3.9" fill="#fff" stroke="#fff" stroke-width="3" stroke-opacity="0.75" fill-opacity="0.75"/>
<circle cx="47" cy="25.8" r="7.7" fill="none" stroke="#fff" stroke-width="6.6" stroke-opacity="0.75"/>
<circle cx="69.2" cy="25.8" r="7.7" fill="none" stroke="#fff" stroke-width="6.6" stroke-opacity="0.75"/>
<circle cx="90.7" cy="25.8" r="7.7" fill="none" stroke="#fff" stroke-width="6.6" stroke-opacity="0.75"/><rect x="96.4" y="16.5" width="3.7" height="19" fill="#fff" stroke="#fff" stroke-width="3" stroke-opacity="0.75" fill-opacity="0.75"/><path d="M98.2,34 A7.9,7.9 0 0 1 83.5,39.5" fill="none" stroke="#fff" stroke-width="6.6" stroke-opacity="0.75"/>
<rect x="103.3" y="7" width="4.4" height="27.8" fill="#fff" stroke="#fff" stroke-width="3" stroke-opacity="0.75" fill-opacity="0.75"/>
<path d="M111.8,25.8 H126.8 A7.6,7.6 0 1 0 124.7,31.3" fill="none" stroke="#fff" stroke-width="6.5" stroke-opacity="0.75"/></g><g><path d="M30.2,11.4 A12.6,12.6 0 1 0 33.1,21" fill="none" stroke="#4285f4" stroke-width="3.9"/><rect x="21" y="19" width="14" height="3.9" fill="#4285f4"/>
<circle cx="47" cy="25.8" r="7.7" fill="none" stroke="#ea4335" stroke-width="3.6"/>
<circle cx="69.2" cy="25.8" r="7.7" fill="none" stroke="#fbbc05" stroke-width="3.6"/>
<circle cx="90.7" cy="25.8" r="7.7" fill="none" stroke="#4285f4" stroke-width="3.6"/><rect x="96.4" y="16.5" width="3.7" height="19" fill="#4285f4"/><path d="M98.2,34 A7.9,7.9 0 0 1 83.5,39.5" fill="none" stroke="#4285f4" stroke-width="3.6"/>
<rect x="103.3" y="7" width="4.4" height="27.8" fill="#34a853"/>
<path d="M111.8,25.8 H126.8 A7.6,7.6 0 1 0 124.7,31.3" fill="none" stroke="#ea4335" stroke-width="3.5"/></g></svg>
</div></div>
</body></html>
